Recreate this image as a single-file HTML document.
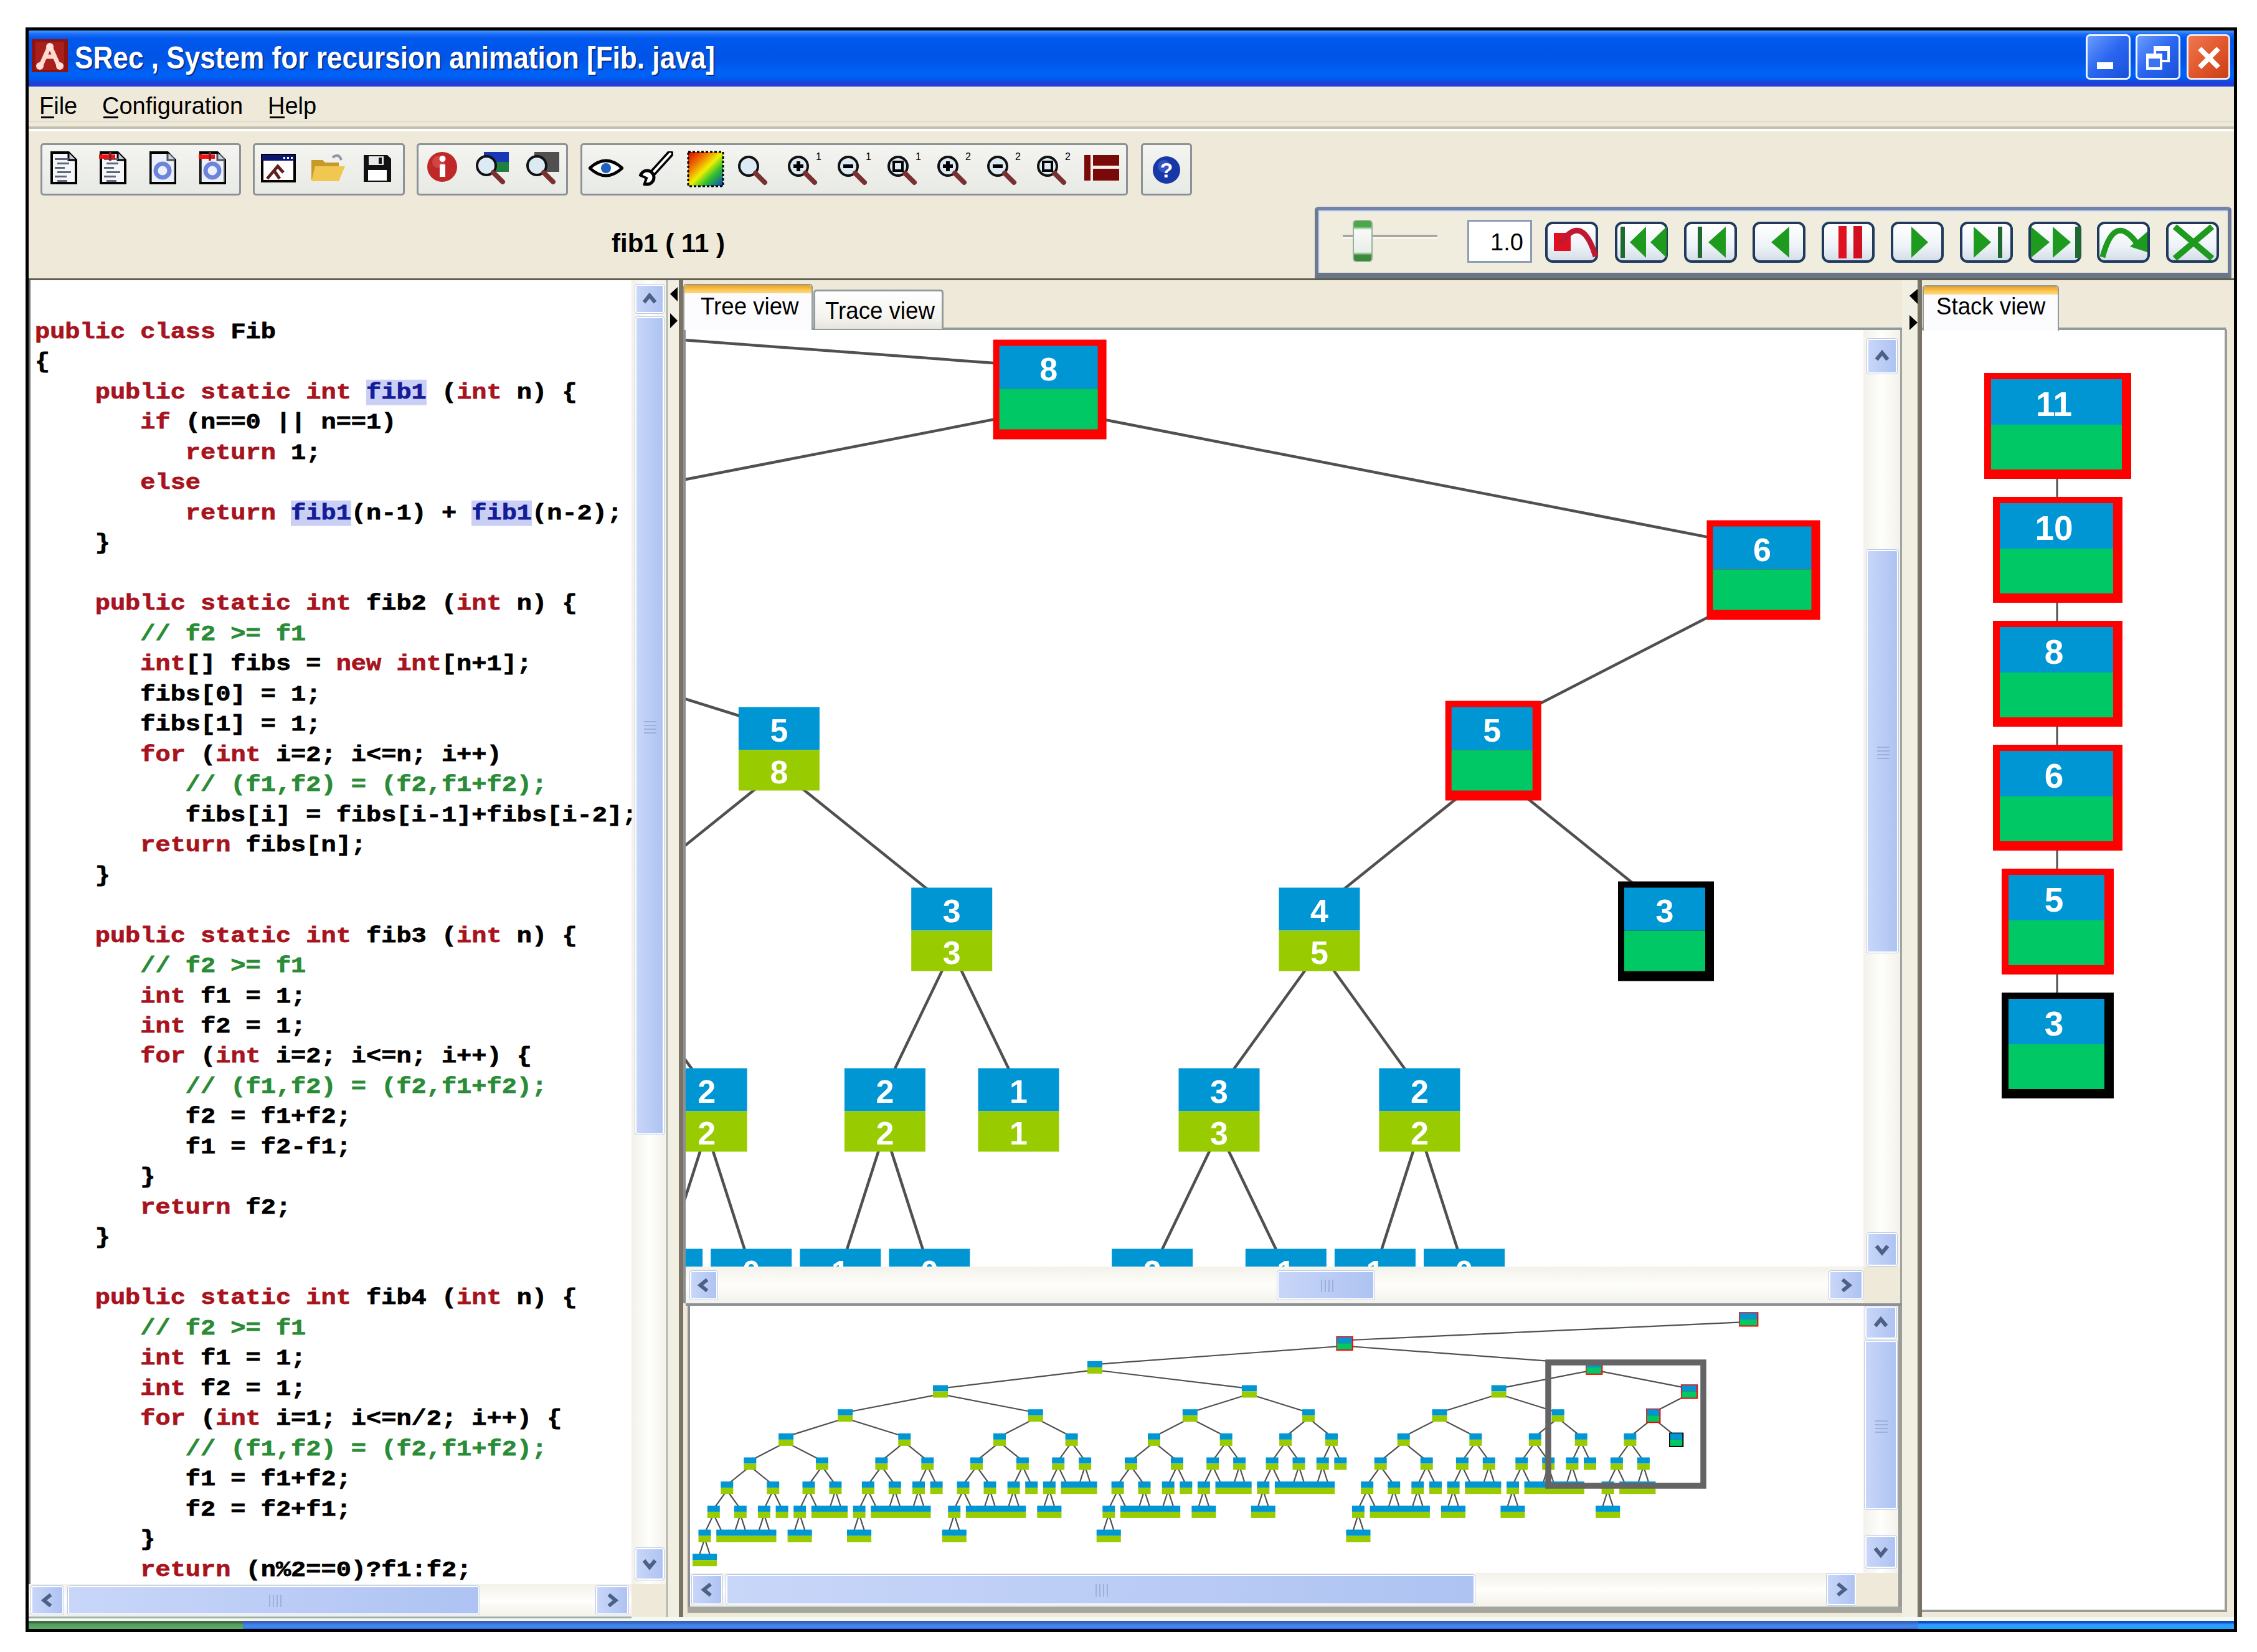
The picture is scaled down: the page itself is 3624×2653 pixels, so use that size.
<!DOCTYPE html><html><head><meta charset="utf-8"><style>
html,body{margin:0;padding:0;background:#fff;}
body{width:3624px;height:2653px;position:relative;overflow:hidden;font-family:"Liberation Sans",sans-serif;}
div,span,svg{position:absolute;box-sizing:border-box;}
.t{white-space:pre;line-height:1;}
.sbb{background:linear-gradient(to right,#C8D6F8,#B9CBF5 60%,#AEC3F2);border:2px solid #fff;outline:1px solid #B8C8E8;border-radius:3px;}
.btn{border:4px solid #1F3A5C;border-radius:12px;background:linear-gradient(#FFFFFF,#EEF3F8 60%,#D5DEE8);}
.grp{border:3px solid #8C9298;border-radius:5px;background:linear-gradient(#F4F4F0,#E8EAE6);}
</style></head><body>
<div style="left:41px;top:44px;width:3551px;height:2577px;background:#000;"></div>
<div style="left:46px;top:49px;width:3541px;height:2567px;background:#EFE9D9;"></div>
<div style="left:46px;top:49px;width:3541px;height:90px;background:linear-gradient(to bottom,#4A9CFF 0%,#1E6FFA 6%,#0058EE 14%,#0054E6 50%,#0062F8 78%,#0058EC 88%,#2040D8 92%,#1F3ED6 100%);"></div>
<svg style="left:51px;top:63px" width="58" height="53" viewBox="0 0 58 53">
<rect x="0" y="0" width="58" height="53" fill="#8E1414"/>
<rect x="6" y="4" width="46" height="45" fill="#A8201C"/>
<path d="M29 10 L14 44 M29 10 L44 44 M22 28 L36 28" stroke="#FFD8D0" stroke-width="7" fill="none"/>
<circle cx="29" cy="12" r="6" fill="#FFE8E0"/><circle cx="13" cy="43" r="6" fill="#FFE0D8"/><circle cx="45" cy="43" r="6" fill="#FFE0D8"/>
</svg>
<div class="t" id="ttl" style="left:120px;top:67.7px;font-size:50px;font-weight:bold;color:#fff;text-shadow:2px 2px 1px #0A2A80;transform-origin:0 0;transform:scaleX(0.883);">SRec , System for recursion animation [Fib. java]</div>
<div style="left:3349px;top:55px;width:72px;height:73px;border:3px solid #F0F6FF;border-radius:7px;background:linear-gradient(135deg,#6A9CFF,#2A66F0 50%,#1A50D8);"><div style="left:15px;top:42px;width:26px;height:11px;background:#fff;"></div></div>
<div style="left:3429px;top:55px;width:72px;height:73px;border:3px solid #F0F6FF;border-radius:7px;background:linear-gradient(135deg,#6A9CFF,#2A66F0 50%,#1A50D8);"><div style="left:26px;top:16px;width:26px;height:26px;border:4px solid #fff;border-top-width:8px;"></div><div style="left:14px;top:28px;width:26px;height:26px;border:4px solid #fff;border-top-width:8px;background:#3A72F0;"></div></div>
<div style="left:3511px;top:55px;width:70px;height:73px;border:3px solid #F6E8E8;border-radius:7px;background:linear-gradient(135deg,#F07850,#E2582E 50%,#C84018);"><svg style="left:10px;top:12px" width="46" height="46"><path d="M8 8 L38 38 M38 8 L8 38" stroke="#fff" stroke-width="8"/></svg></div>
<div style="left:46px;top:194px;width:3541px;height:2px;background:#DEDACB;"></div>
<div style="left:46px;top:203px;width:3541px;height:4px;background:#C2BFAE;"></div>
<div style="left:46px;top:207px;width:3541px;height:4px;background:#FFFFFF;"></div>
<div class="t" style="left:63px;top:151.4px;font-size:38px;color:#000;">File</div>
<div class="t" style="left:164px;top:151.4px;font-size:38px;color:#000;">Configuration</div>
<div class="t" style="left:430px;top:151.4px;font-size:38px;color:#000;">Help</div>
<div style="left:66px;top:187px;width:21px;height:3px;background:#000;"></div>
<div style="left:166px;top:187px;width:24px;height:3px;background:#000;"></div>
<div style="left:433px;top:187px;width:24px;height:3px;background:#000;"></div>
<div class="grp" style="left:65px;top:230px;width:322px;height:84px;"></div>
<div class="grp" style="left:406px;top:230px;width:244px;height:84px;"></div>
<div class="grp" style="left:669px;top:230px;width:243px;height:84px;"></div>
<div class="grp" style="left:932px;top:230px;width:879px;height:84px;"></div>
<div class="grp" style="left:1832px;top:230px;width:82px;height:84px;"></div>
<svg style="left:80px;top:242px" width="45" height="55" viewBox="0 0 45 55"><path d="M3 3 H30 L42 15 V52 H3 Z" fill="#F4F6FA" stroke="#000" stroke-width="4"/><path d="M30 3 V15 H42" fill="#C8CCD4" stroke="#000" stroke-width="3"/><rect x="8" y="12" width="22" height="3" fill="#606878"/><rect x="12" y="19" width="19" height="3" fill="#606878"/><rect x="8" y="26" width="16" height="3" fill="#606878"/><rect x="12" y="33" width="22" height="3" fill="#606878"/><rect x="8" y="40" width="19" height="3" fill="#606878"/><rect x="12" y="47" width="16" height="3" fill="#606878"/></svg>
<svg style="left:159px;top:242px" width="45" height="55" viewBox="0 0 45 55"><path d="M3 3 H30 L42 15 V52 H3 Z" fill="#F4F6FA" stroke="#000" stroke-width="4"/><path d="M30 3 V15 H42" fill="#C8CCD4" stroke="#000" stroke-width="3"/><rect x="8" y="12" width="22" height="3" fill="#606878"/><rect x="12" y="19" width="19" height="3" fill="#606878"/><rect x="8" y="26" width="16" height="3" fill="#606878"/><rect x="12" y="33" width="22" height="3" fill="#606878"/><rect x="8" y="40" width="19" height="3" fill="#606878"/><rect x="12" y="47" width="16" height="3" fill="#606878"/><rect x="0" y="6" width="26" height="7" fill="#F01010"/><rect x="16" y="2" width="4" height="14" fill="#802020"/></svg>
<svg style="left:239px;top:242px" width="45" height="55" viewBox="0 0 45 55"><path d="M3 3 H30 L42 15 V52 H3 Z" fill="#F4F6FA" stroke="#000" stroke-width="4"/><path d="M30 3 V15 H42" fill="#C8CCD4" stroke="#000" stroke-width="3"/><circle cx="22" cy="32" r="11" fill="none" stroke="#3050C8" stroke-width="7"/><rect x="3" y="5" width="39" height="45" fill="#DCE6FA" opacity="0.35"/></svg>
<svg style="left:319px;top:242px" width="45" height="55" viewBox="0 0 45 55"><path d="M3 3 H30 L42 15 V52 H3 Z" fill="#F4F6FA" stroke="#000" stroke-width="4"/><path d="M30 3 V15 H42" fill="#C8CCD4" stroke="#000" stroke-width="3"/><circle cx="22" cy="32" r="11" fill="none" stroke="#3050C8" stroke-width="7"/><rect x="3" y="5" width="39" height="45" fill="#DCE6FA" opacity="0.35"/><rect x="0" y="6" width="26" height="7" fill="#F01010"/><rect x="16" y="2" width="4" height="14" fill="#802020"/></svg>
<svg style="left:419px;top:247px" width="56" height="46" viewBox="0 0 56 46"><rect x="2" y="2" width="52" height="42" fill="#fff" stroke="#000" stroke-width="4"/><rect x="2" y="2" width="52" height="9" fill="#0A1670"/><rect x="36" y="5" width="3" height="3" fill="#fff"/><rect x="42" y="5" width="3" height="3" fill="#fff"/><rect x="48" y="5" width="3" height="3" fill="#fff"/><path d="M10 40 L27 20 L36 30 M21 27 L30 40" stroke="#602020" stroke-width="5" fill="none"/></svg>
<svg style="left:498px;top:245px" width="57" height="48" viewBox="0 0 57 48"><path d="M2 12 H20 L24 16 H46 V44 H2 Z" fill="#C89828"/><path d="M8 22 H56 L46 46 H2 Z" fill="#F0C850"/><path d="M36 8 Q46 0 50 12" stroke="#9098A8" stroke-width="4" fill="none"/></svg>
<svg style="left:582px;top:247px" width="48" height="47" viewBox="0 0 48 47"><path d="M2 2 H40 L46 8 V45 H2 Z" fill="#111"/><rect x="10" y="4" width="24" height="14" fill="#E8E8E8"/><rect x="26" y="6" width="5" height="10" fill="#111"/><rect x="9" y="26" width="30" height="17" fill="#fff"/></svg>
<svg style="left:684px;top:242px" width="52" height="52" viewBox="0 0 52 52"><circle cx="26" cy="26" r="24" fill="#C02828"/><circle cx="20" cy="18" r="10" fill="#E06060" opacity="0.5"/><rect x="22" y="22" width="9" height="20" fill="#fff"/><circle cx="26.5" cy="13" r="5" fill="#fff"/></svg>
<svg style="left:761px;top:242px" width="58" height="56" viewBox="0 0 58 56"><rect x="16" y="2" width="40" height="32" fill="#1838B8"/><rect x="28" y="18" width="28" height="16" fill="#208040"/><circle cx="20" cy="24" r="15" fill="#DCEAF4" stroke="#111" stroke-width="4"/><path d="M31 35 L46 50" stroke="#7A3030" stroke-width="8" stroke-linecap="round"/></svg>
<svg style="left:842px;top:242px" width="58" height="56" viewBox="0 0 58 56"><rect x="16" y="2" width="40" height="32" fill="#505050"/><circle cx="20" cy="24" r="15" fill="#DCEAF4" stroke="#111" stroke-width="4"/><path d="M31 35 L46 50" stroke="#7A3030" stroke-width="8" stroke-linecap="round"/></svg>
<svg style="left:945px;top:252px" width="56" height="36" viewBox="0 0 56 36"><path d="M2 18 Q28 -6 54 18 Q28 42 2 18 Z" fill="#fff" stroke="#000" stroke-width="5"/><circle cx="28" cy="18" r="8" fill="#2060C0"/></svg>
<svg style="left:1023px;top:243px" width="58" height="56" viewBox="0 0 58 56"><path d="M53 4 L24 36" stroke="#000" stroke-width="11" stroke-linecap="round"/><path d="M53 4 L24 36" stroke="#fff" stroke-width="4" stroke-linecap="round"/><circle cx="16" cy="42" r="11" fill="#fff" stroke="#000" stroke-width="5"/><path d="M0 40 L14 44 L8 58" fill="#EFEFEA" stroke="#EFEFEA" stroke-width="2"/><path d="M4 38 L15 43 L11 55" fill="none" stroke="#000" stroke-width="4"/></svg>
<svg style="left:1103px;top:242px" width="60" height="59" viewBox="0 0 60 59"><defs><linearGradient id="cg" x1="0" y1="0" x2="1" y2="1"><stop offset="0" stop-color="#E00000"/><stop offset="0.3" stop-color="#F08000"/><stop offset="0.5" stop-color="#F0F000"/><stop offset="0.7" stop-color="#30C030"/><stop offset="1" stop-color="#1040C0"/></linearGradient></defs><rect x="2" y="2" width="56" height="55" fill="url(#cg)" stroke="#000" stroke-width="3" stroke-dasharray="4 3"/></svg>
<svg style="left:1182px;top:243px" width="58" height="56" viewBox="0 0 58 56"><circle cx="20" cy="24" r="15" fill="#DCEAF4" stroke="#111" stroke-width="4"/><path d="M31 35 L46 50" stroke="#7A3030" stroke-width="8" stroke-linecap="round"/></svg>
<svg style="left:1262px;top:243px" width="58" height="56" viewBox="0 0 58 56"><circle cx="20" cy="24" r="15" fill="#DCEAF4" stroke="#111" stroke-width="4"/><path d="M31 35 L46 50" stroke="#7A3030" stroke-width="8" stroke-linecap="round"/><path d="M12 24 H28 M20 16 V32" stroke="#000" stroke-width="6"/><text x="48" y="14" font-size="16" font-family="Liberation Sans" fill="#000">1</text></svg>
<svg style="left:1342px;top:243px" width="58" height="56" viewBox="0 0 58 56"><circle cx="20" cy="24" r="15" fill="#DCEAF4" stroke="#111" stroke-width="4"/><path d="M31 35 L46 50" stroke="#7A3030" stroke-width="8" stroke-linecap="round"/><path d="M12 24 H28" stroke="#000" stroke-width="6"/><text x="48" y="14" font-size="16" font-family="Liberation Sans" fill="#000">1</text></svg>
<svg style="left:1422px;top:243px" width="58" height="56" viewBox="0 0 58 56"><circle cx="20" cy="24" r="15" fill="#DCEAF4" stroke="#111" stroke-width="4"/><path d="M31 35 L46 50" stroke="#7A3030" stroke-width="8" stroke-linecap="round"/><rect x="13" y="17" width="14" height="14" fill="none" stroke="#000" stroke-width="4"/><text x="48" y="14" font-size="16" font-family="Liberation Sans" fill="#000">1</text></svg>
<svg style="left:1502px;top:243px" width="58" height="56" viewBox="0 0 58 56"><circle cx="20" cy="24" r="15" fill="#DCEAF4" stroke="#111" stroke-width="4"/><path d="M31 35 L46 50" stroke="#7A3030" stroke-width="8" stroke-linecap="round"/><path d="M12 24 H28 M20 16 V32" stroke="#000" stroke-width="6"/><text x="48" y="14" font-size="16" font-family="Liberation Sans" fill="#000">2</text></svg>
<svg style="left:1582px;top:243px" width="58" height="56" viewBox="0 0 58 56"><circle cx="20" cy="24" r="15" fill="#DCEAF4" stroke="#111" stroke-width="4"/><path d="M31 35 L46 50" stroke="#7A3030" stroke-width="8" stroke-linecap="round"/><path d="M12 24 H28" stroke="#000" stroke-width="6"/><text x="48" y="14" font-size="16" font-family="Liberation Sans" fill="#000">2</text></svg>
<svg style="left:1662px;top:243px" width="58" height="56" viewBox="0 0 58 56"><circle cx="20" cy="24" r="15" fill="#DCEAF4" stroke="#111" stroke-width="4"/><path d="M31 35 L46 50" stroke="#7A3030" stroke-width="8" stroke-linecap="round"/><rect x="13" y="17" width="14" height="14" fill="none" stroke="#000" stroke-width="4"/><text x="48" y="14" font-size="16" font-family="Liberation Sans" fill="#000">2</text></svg>
<svg style="left:1741px;top:249px" width="56" height="41" viewBox="0 0 56 41"><rect x="0" y="0" width="56" height="41" fill="#7A0A0A"/><rect x="14" y="17" width="42" height="5" fill="#F4F0E8"/><rect x="10" y="0" width="4" height="41" fill="#F4F0E8"/></svg>
<svg style="left:1849px;top:249px" width="48" height="48" viewBox="0 0 48 48"><circle cx="24" cy="24" r="22" fill="#1838A8"/><circle cx="20" cy="18" r="10" fill="#4868D8" opacity="0.6"/><text x="24" y="36" font-size="34" font-weight="bold" text-anchor="middle" font-family="Liberation Sans" fill="#fff">?</text></svg>
<div class="t" id="lbl" style="left:982px;top:370px;font-size:42px;font-weight:bold;color:#000;">fib1 ( 11 )</div>
<div style="left:2111px;top:332px;width:1472px;height:120px;border-style:solid;border-color:#7384AC #6E7C98 #6A7686 #6C7A90;border-width:6px 6px 14px 6px;border-radius:6px;background:#F0ECDE;box-shadow:inset 0 2px 0 #D8E4F8,inset 2px 0 0 #D8E4F8;"></div>
<div style="left:2156px;top:377px;width:152px;height:4px;background:#A8A8A0;"></div>
<div style="left:2156px;top:381px;width:152px;height:2px;background:#FFFFFF;"></div>
<div style="left:2172px;top:353px;width:32px;height:68px;border:2px solid #9AB0A0;border-radius:6px;background:linear-gradient(#4AA84A 0,#4AA84A 14%,#F8FAF8 22%,#E8EEE8 78%,#3A8A3A 86%,#3A8A3A 100%);"></div>
<div style="left:2356px;top:353px;width:104px;height:69px;border:3px solid #8A9CB4;background:#fff;"><div class="t" style="left:34px;top:14px;font-size:38px;color:#000;">1.0</div></div>
<div class="btn" style="left:2481px;top:356px;width:85px;height:66px;"></div>
<div class="btn" style="left:2593px;top:356px;width:85px;height:66px;"></div>
<div class="btn" style="left:2704px;top:356px;width:85px;height:66px;"></div>
<div class="btn" style="left:2814px;top:356px;width:85px;height:66px;"></div>
<div class="btn" style="left:2925px;top:356px;width:85px;height:66px;"></div>
<div class="btn" style="left:3036px;top:356px;width:85px;height:66px;"></div>
<div class="btn" style="left:3147px;top:356px;width:85px;height:66px;"></div>
<div class="btn" style="left:3257px;top:356px;width:85px;height:66px;"></div>
<div class="btn" style="left:3367px;top:356px;width:85px;height:66px;"></div>
<div class="btn" style="left:3478px;top:356px;width:85px;height:66px;"></div>
<svg style="left:0;top:0" width="3624" height="460"><rect x="2495" y="374" width="27" height="29" fill="#E01020"/><path d="M2505 392 Q2540 340 2562 412" stroke="#C01830" stroke-width="9" fill="none"/><rect x="2602" y="364" width="7" height="50" fill="#1F6A30"/><path d="M2617 389.0 L2643 364 L2643 414 Z" fill="#1E9A1E"/><path d="M2650 389.0 L2676 364 L2676 414 Z" fill="#1E9A1E"/><rect x="2726" y="364" width="7" height="50" fill="#1F6A30"/><path d="M2743 389.0 L2771 364 L2771 414 Z" fill="#1E9A1E"/><path d="M2844 389.0 L2873 364 L2873 414 Z" fill="#1E9A1E"/><rect x="2952" y="363" width="13" height="52" fill="#E01020"/><rect x="2976" y="363" width="14" height="52" fill="#D01020"/><path d="M3096 389.0 L3069 364 L3069 414 Z" fill="#1E9A1E"/><path d="M3197 389.0 L3169 364 L3169 414 Z" fill="#1E9A1E"/><rect x="3208" y="364" width="7" height="50" fill="#1F6A30"/><path d="M3291 389.0 L3261 364 L3261 414 Z" fill="#1E9A1E"/><path d="M3325 389.0 L3296 364 L3296 414 Z" fill="#1E9A1E"/><rect x="3332" y="364" width="9" height="50" fill="#1F6A30"/><path d="M3376 413 Q3395 340 3432 392" stroke="#1E9A1E" stroke-width="9" fill="none"/><path d="M3420 396 L3448 372 L3448 405 Z" fill="#1E9A1E"/><path d="M3492 364 L3552 415 M3552 364 L3492 415" stroke="#1E9A1E" stroke-width="10"/></svg>
<div style="left:46px;top:447px;width:3541px;height:3px;background:#5E5E52;"></div>
<div style="left:46px;top:450px;width:968px;height:2094px;background:#fff;"></div>
<div style="left:46px;top:450px;width:3px;height:2147px;background:#707074;"></div>
<div style="left:0;top:0;width:1014px;height:2544px;overflow:hidden;"><div class="t code" style="left:56px;top:511.7px;"><b style="color:#A8141E">public class </b><b>Fib</b></div><div class="t code" style="left:56px;top:560.2px;"><b>{</b></div><div class="t code" style="left:56px;top:608.7px;"><b>    </b><b style="color:#A8141E">public static int </b><b style="color:#161C98;background:#CACFF6">fib1</b><b> (</b><b style="color:#A8141E">int</b><b> n) {</b></div><div class="t code" style="left:56px;top:657.1px;"><b>       </b><b style="color:#A8141E">if</b><b> (n==0 || n==1)</b></div><div class="t code" style="left:56px;top:705.6px;"><b>          </b><b style="color:#A8141E">return</b><b> 1;</b></div><div class="t code" style="left:56px;top:754.1px;"><b>       </b><b style="color:#A8141E">else</b></div><div class="t code" style="left:56px;top:802.6px;"><b>          </b><b style="color:#A8141E">return </b><b style="color:#161C98;background:#CACFF6">fib1</b><b>(n-1) + </b><b style="color:#161C98;background:#CACFF6">fib1</b><b>(n-2);</b></div><div class="t code" style="left:56px;top:851.1px;"><b>    }</b></div><div class="t code" style="left:56px;top:899.6px;"></div><div class="t code" style="left:56px;top:948.1px;"><b>    </b><b style="color:#A8141E">public static int </b><b>fib2 (</b><b style="color:#A8141E">int</b><b> n) {</b></div><div class="t code" style="left:56px;top:996.6px;"><b>       </b><b style="color:#2A8C36">// f2 &gt;= f1</b></div><div class="t code" style="left:56px;top:1045.1px;"><b>       </b><b style="color:#A8141E">int</b><b>[] fibs = </b><b style="color:#A8141E">new int</b><b>[n+1];</b></div><div class="t code" style="left:56px;top:1093.6px;"><b>       fibs[0] = 1;</b></div><div class="t code" style="left:56px;top:1142.0px;"><b>       fibs[1] = 1;</b></div><div class="t code" style="left:56px;top:1190.5px;"><b>       </b><b style="color:#A8141E">for</b><b> (</b><b style="color:#A8141E">int</b><b> i=2; i&lt;=n; i++)</b></div><div class="t code" style="left:56px;top:1239.0px;"><b>          </b><b style="color:#2A8C36">// (f1,f2) = (f2,f1+f2);</b></div><div class="t code" style="left:56px;top:1287.5px;"><b>          fibs[i] = fibs[i-1]+fibs[i-2];</b></div><div class="t code" style="left:56px;top:1336.0px;"><b>       </b><b style="color:#A8141E">return</b><b> fibs[n];</b></div><div class="t code" style="left:56px;top:1384.5px;"><b>    }</b></div><div class="t code" style="left:56px;top:1433.0px;"></div><div class="t code" style="left:56px;top:1481.5px;"><b>    </b><b style="color:#A8141E">public static int </b><b>fib3 (</b><b style="color:#A8141E">int</b><b> n) {</b></div><div class="t code" style="left:56px;top:1530.0px;"><b>       </b><b style="color:#2A8C36">// f2 &gt;= f1</b></div><div class="t code" style="left:56px;top:1578.5px;"><b>       </b><b style="color:#A8141E">int</b><b> f1 = 1;</b></div><div class="t code" style="left:56px;top:1626.9px;"><b>       </b><b style="color:#A8141E">int</b><b> f2 = 1;</b></div><div class="t code" style="left:56px;top:1675.4px;"><b>       </b><b style="color:#A8141E">for</b><b> (</b><b style="color:#A8141E">int</b><b> i=2; i&lt;=n; i++) {</b></div><div class="t code" style="left:56px;top:1723.9px;"><b>          </b><b style="color:#2A8C36">// (f1,f2) = (f2,f1+f2);</b></div><div class="t code" style="left:56px;top:1772.4px;"><b>          f2 = f1+f2;</b></div><div class="t code" style="left:56px;top:1820.9px;"><b>          f1 = f2-f1;</b></div><div class="t code" style="left:56px;top:1869.4px;"><b>       }</b></div><div class="t code" style="left:56px;top:1917.9px;"><b>       </b><b style="color:#A8141E">return</b><b> f2;</b></div><div class="t code" style="left:56px;top:1966.4px;"><b>    }</b></div><div class="t code" style="left:56px;top:2014.9px;"></div><div class="t code" style="left:56px;top:2063.4px;"><b>    </b><b style="color:#A8141E">public static int </b><b>fib4 (</b><b style="color:#A8141E">int</b><b> n) {</b></div><div class="t code" style="left:56px;top:2111.8px;"><b>       </b><b style="color:#2A8C36">// f2 &gt;= f1</b></div><div class="t code" style="left:56px;top:2160.3px;"><b>       </b><b style="color:#A8141E">int</b><b> f1 = 1;</b></div><div class="t code" style="left:56px;top:2208.8px;"><b>       </b><b style="color:#A8141E">int</b><b> f2 = 1;</b></div><div class="t code" style="left:56px;top:2257.3px;"><b>       </b><b style="color:#A8141E">for</b><b> (</b><b style="color:#A8141E">int</b><b> i=1; i&lt;=n/2; i++) {</b></div><div class="t code" style="left:56px;top:2305.8px;"><b>          </b><b style="color:#2A8C36">// (f1,f2) = (f2,f1+f2);</b></div><div class="t code" style="left:56px;top:2354.3px;"><b>          f1 = f1+f2;</b></div><div class="t code" style="left:56px;top:2402.8px;"><b>          f2 = f2+f1;</b></div><div class="t code" style="left:56px;top:2451.3px;"><b>       }</b></div><div class="t code" style="left:56px;top:2499.8px;"><b>       </b><b style="color:#A8141E">return</b><b> (n%2==0)?f1:f2;</b></div></div>
<style>.code{font-family:"Liberation Mono",monospace;font-size:40.3px;color:#000;transform:scaleY(0.89);transform-origin:0 30.8px;-webkit-text-stroke:0.9px currentColor;} .code b{position:static;font-weight:bold;}</style>
<div style="left:1014px;top:450px;width:56px;height:2094px;background:linear-gradient(to right,#F3F1EA,#FEFEFB 50%,#F3F1EA);"></div>
<div class="sbb" style="left:1020px;top:457px;width:46px;height:46px;"><svg style="left:-2px;top:-2px" width="46" height="46"><path d="M14.0 28.5 L23.0 17.5 L32.0 28.5" stroke="#4D6185" stroke-width="6" fill="none"/></svg></div>
<div class="sbb" style="left:1020px;top:509px;width:46px;height:1313px;"><div style="left:12.0px;top:646.5px;width:20px;height:2px;background:#EEF4FE;border-bottom:2px solid #9CB0DC;"></div><div style="left:12.0px;top:652.5px;width:20px;height:2px;background:#EEF4FE;border-bottom:2px solid #9CB0DC;"></div><div style="left:12.0px;top:658.5px;width:20px;height:2px;background:#EEF4FE;border-bottom:2px solid #9CB0DC;"></div><div style="left:12.0px;top:664.5px;width:20px;height:2px;background:#EEF4FE;border-bottom:2px solid #9CB0DC;"></div></div>
<div class="sbb" style="left:1020px;top:2486px;width:46px;height:51px;"><svg style="left:-2px;top:-2px" width="46" height="51"><path d="M14.0 20.0 L23.0 31.0 L32.0 20.0" stroke="#4D6185" stroke-width="6" fill="none"/></svg></div>
<div style="left:46px;top:2544px;width:968px;height:53px;background:linear-gradient(to bottom,#F3F1EA,#FEFEFB 50%,#F3F1EA);"></div>
<div class="sbb" style="left:50px;top:2547px;width:52px;height:46px;"><svg style="left:-2px;top:-2px" width="52" height="46"><path d="M31.5 14.0 L20.5 23.0 L31.5 32.0" stroke="#4D6185" stroke-width="6" fill="none"/></svg></div>
<div class="sbb" style="left:109px;top:2547px;width:661px;height:46px;"><div style="left:320.5px;top:12.0px;width:2px;height:20px;background:#EEF4FE;border-right:2px solid #9CB0DC;"></div><div style="left:326.5px;top:12.0px;width:2px;height:20px;background:#EEF4FE;border-right:2px solid #9CB0DC;"></div><div style="left:332.5px;top:12.0px;width:2px;height:20px;background:#EEF4FE;border-right:2px solid #9CB0DC;"></div><div style="left:338.5px;top:12.0px;width:2px;height:20px;background:#EEF4FE;border-right:2px solid #9CB0DC;"></div></div>
<div class="sbb" style="left:957px;top:2547px;width:52px;height:46px;"><svg style="left:-2px;top:-2px" width="52" height="46"><path d="M20.5 14.0 L31.5 23.0 L20.5 32.0" stroke="#4D6185" stroke-width="6" fill="none"/></svg></div>
<div style="left:1014px;top:2544px;width:56px;height:53px;background:#EFE9D9;"></div>
<div style="left:1070px;top:450px;width:2px;height:2147px;background:#A8A89C;"></div>
<div style="left:1072px;top:450px;width:18px;height:2150px;background:#F1EEE2;"></div>
<svg style="left:1074px;top:460px" width="16" height="68" viewBox="0 0 16 68"><path d="M2 12 L14 1 V24 Z M2 43 V67 L14 55 Z" fill="#000"/></svg>
<div style="left:1090px;top:450px;width:7px;height:2150px;background:#7A7262;"></div>
<div style="left:1097px;top:450px;width:1957px;height:80px;background:#EFE9D9;"></div>
<div style="left:1097px;top:526px;width:1957px;height:4px;background:#919B9C;"></div>
<div style="left:1306px;top:465px;width:209px;height:63px;border:3px solid #919B9C;border-bottom:none;border-radius:5px 5px 0 0;background:linear-gradient(#FFFFFF,#F4F3EE 70%,#E6E4DC);"></div>
<div class="t" style="left:1325px;top:479px;font-size:39px;color:#000;transform:scaleX(0.94);transform-origin:0 0;">Trace view</div>
<div style="left:1097px;top:456px;width:208px;height:75px;border:2px solid #919B9C;border-bottom:none;border-radius:5px 5px 0 0;background:#FCFCFE;"><div style="left:0;top:0;width:204px;height:13px;border-radius:4px 4px 0 0;background:linear-gradient(#E8A028,#FFC850 60%,#F8D890);"></div></div>
<div class="t" style="left:1125px;top:472px;font-size:39px;color:#000;transform:scaleX(0.94);transform-origin:0 0;">Tree view</div>
<div style="left:1097px;top:530px;width:4px;height:1563px;background:#8C9094;"></div>
<div style="left:1101px;top:530px;width:1891px;height:1504px;background:#fff;"></div>
<div style="left:2992px;top:530px;width:59px;height:1504px;background:linear-gradient(to right,#F3F1EA,#FEFEFB 50%,#F3F1EA);"></div>
<div class="sbb" style="left:2998px;top:544px;width:48px;height:56px;"><svg style="left:-2px;top:-2px" width="48" height="56"><path d="M15.0 33.5 L24.0 22.5 L33.0 33.5" stroke="#4D6185" stroke-width="6" fill="none"/></svg></div>
<div class="sbb" style="left:2997px;top:883px;width:51px;height:647px;"><div style="left:14.5px;top:313.5px;width:20px;height:2px;background:#EEF4FE;border-bottom:2px solid #9CB0DC;"></div><div style="left:14.5px;top:319.5px;width:20px;height:2px;background:#EEF4FE;border-bottom:2px solid #9CB0DC;"></div><div style="left:14.5px;top:325.5px;width:20px;height:2px;background:#EEF4FE;border-bottom:2px solid #9CB0DC;"></div><div style="left:14.5px;top:331.5px;width:20px;height:2px;background:#EEF4FE;border-bottom:2px solid #9CB0DC;"></div></div>
<div class="sbb" style="left:2998px;top:1980px;width:48px;height:53px;"><svg style="left:-2px;top:-2px" width="48" height="53"><path d="M15.0 21.0 L24.0 32.0 L33.0 21.0" stroke="#4D6185" stroke-width="6" fill="none"/></svg></div>
<div style="left:1101px;top:2034px;width:1891px;height:59px;background:linear-gradient(to bottom,#F3F1EA,#FEFEFB 50%,#F3F1EA);"></div>
<div class="sbb" style="left:1108px;top:2041px;width:44px;height:46px;"><svg style="left:-2px;top:-2px" width="44" height="46"><path d="M27.5 14.0 L16.5 23.0 L27.5 32.0" stroke="#4D6185" stroke-width="6" fill="none"/></svg></div>
<div class="sbb" style="left:2051px;top:2041px;width:156px;height:46px;"><div style="left:68.0px;top:12.0px;width:2px;height:20px;background:#EEF4FE;border-right:2px solid #9CB0DC;"></div><div style="left:74.0px;top:12.0px;width:2px;height:20px;background:#EEF4FE;border-right:2px solid #9CB0DC;"></div><div style="left:80.0px;top:12.0px;width:2px;height:20px;background:#EEF4FE;border-right:2px solid #9CB0DC;"></div><div style="left:86.0px;top:12.0px;width:2px;height:20px;background:#EEF4FE;border-right:2px solid #9CB0DC;"></div></div>
<div class="sbb" style="left:2937px;top:2041px;width:54px;height:46px;"><svg style="left:-2px;top:-2px" width="54" height="46"><path d="M21.5 14.0 L32.5 23.0 L21.5 32.0" stroke="#4D6185" stroke-width="6" fill="none"/></svg></div>
<div style="left:2992px;top:2034px;width:59px;height:59px;background:#EFE9D9;"></div>
<div style="left:1101px;top:2093px;width:1953px;height:4px;background:#8C9094;"></div>
<div style="left:3051px;top:530px;width:4px;height:1563px;background:#A0A4A0;"></div>
<div style="left:1104px;top:2097px;width:4px;height:486px;background:#8C9094;"></div>
<div style="left:1108px;top:2097px;width:1884px;height:431px;background:#fff;"></div>
<div style="left:2992px;top:2097px;width:56px;height:431px;background:linear-gradient(to right,#F3F1EA,#FEFEFB 50%,#F3F1EA);"></div>
<div class="sbb" style="left:2995px;top:2098px;width:50px;height:52px;"><svg style="left:-2px;top:-2px" width="50" height="52"><path d="M16.0 31.5 L25.0 20.5 L34.0 31.5" stroke="#4D6185" stroke-width="6" fill="none"/></svg></div>
<div class="sbb" style="left:2994px;top:2153px;width:52px;height:271px;"><div style="left:15.0px;top:125.5px;width:20px;height:2px;background:#EEF4FE;border-bottom:2px solid #9CB0DC;"></div><div style="left:15.0px;top:131.5px;width:20px;height:2px;background:#EEF4FE;border-bottom:2px solid #9CB0DC;"></div><div style="left:15.0px;top:137.5px;width:20px;height:2px;background:#EEF4FE;border-bottom:2px solid #9CB0DC;"></div><div style="left:15.0px;top:143.5px;width:20px;height:2px;background:#EEF4FE;border-bottom:2px solid #9CB0DC;"></div></div>
<div class="sbb" style="left:2995px;top:2466px;width:50px;height:52px;"><svg style="left:-2px;top:-2px" width="50" height="52"><path d="M16.0 20.5 L25.0 31.5 L34.0 20.5" stroke="#4D6185" stroke-width="6" fill="none"/></svg></div>
<div style="left:1108px;top:2526px;width:1884px;height:54px;background:linear-gradient(to bottom,#F3F1EA,#FEFEFB 50%,#F3F1EA);"></div>
<div class="sbb" style="left:1111px;top:2529px;width:49px;height:48px;"><svg style="left:-2px;top:-2px" width="49" height="48"><path d="M30.0 15.0 L19.0 24.0 L30.0 33.0" stroke="#4D6185" stroke-width="6" fill="none"/></svg></div>
<div class="sbb" style="left:1166px;top:2529px;width:1202px;height:48px;"><div style="left:591.0px;top:13.0px;width:2px;height:20px;background:#EEF4FE;border-right:2px solid #9CB0DC;"></div><div style="left:597.0px;top:13.0px;width:2px;height:20px;background:#EEF4FE;border-right:2px solid #9CB0DC;"></div><div style="left:603.0px;top:13.0px;width:2px;height:20px;background:#EEF4FE;border-right:2px solid #9CB0DC;"></div><div style="left:609.0px;top:13.0px;width:2px;height:20px;background:#EEF4FE;border-right:2px solid #9CB0DC;"></div></div>
<div class="sbb" style="left:2933px;top:2527px;width:47px;height:51px;"><svg style="left:-2px;top:-2px" width="47" height="51"><path d="M18.0 16.5 L29.0 25.5 L18.0 34.5" stroke="#4D6185" stroke-width="6" fill="none"/></svg></div>
<div style="left:2980px;top:2526px;width:68px;height:54px;background:#EFE9D9;"></div>
<div style="left:3048px;top:2097px;width:6px;height:493px;background:#9A9C98;"></div>
<div style="left:1104px;top:2580px;width:1950px;height:10px;background:#A4A69E;"></div>
<div style="left:3054px;top:450px;width:25px;height:2150px;background:#F1EEE2;"></div>
<svg style="left:3064px;top:462px" width="17" height="70" viewBox="0 0 17 70"><path d="M2 13 L15 2 V26 Z M2 44 V68 L15 56 Z" fill="#000"/></svg>
<div style="left:3079px;top:450px;width:7px;height:2150px;background:#7A7262;"></div>
<div style="left:3086px;top:450px;width:501px;height:2153px;background:#EFE9D9;"></div>
<div style="left:3086px;top:529px;width:488px;height:2058px;background:#fff;"></div>
<div style="left:3572px;top:529px;width:4px;height:2060px;background:#9A9C98;"></div>
<div style="left:3086px;top:2585px;width:490px;height:4px;background:#9A9C98;"></div>
<div style="left:3086px;top:526px;width:488px;height:4px;background:#919B9C;"></div>
<div style="left:3087px;top:458px;width:219px;height:73px;border:2px solid #919B9C;border-bottom:none;border-radius:5px 5px 0 0;background:#FCFCFE;"><div style="left:0;top:0;width:215px;height:13px;border-radius:4px 4px 0 0;background:linear-gradient(#E8A028,#FFC850 60%,#F8D890);"></div></div>
<div class="t" style="left:3109px;top:471.5px;font-size:39px;color:#000;transform:scaleX(0.94);transform-origin:0 0;">Stack view</div>
<div style="left:46px;top:2597px;width:3541px;height:6px;background:#F6F8F2;"></div>
<div style="left:46px;top:2596px;width:968px;height:3px;background:#A0B0A8;"></div>
<div style="left:46px;top:2603px;width:3034px;height:13px;background:linear-gradient(#2E5CC0 0,#3A66C4 25%,#4A7ED0 45%,#3E8AFA 65%,#3A86F8 80%,#2A6EE6 100%);"></div>
<div style="left:3080px;top:2603px;width:507px;height:13px;background:linear-gradient(#0A50C8 0,#0A50C8 20%,#3A96FF 45%,#14AAFF 100%);"></div>
<div style="left:46px;top:2603px;width:344px;height:13px;background:linear-gradient(#3A7042 0,#3A7042 20%,#609A6A 45%,#52A85A 70%,#5EB264 100%);"></div>
<svg style="left:0;top:0" width="3624" height="2653"><defs><clipPath id="cm"><rect x="1101" y="530" width="1891" height="1504"/></clipPath><clipPath id="co"><rect x="1108" y="2097" width="1884" height="429"/></clipPath></defs><style>.nt{font-family:"Liberation Sans",sans-serif;font-weight:bold;font-size:52px;fill:#fff;text-anchor:middle;}</style><g clip-path="url(#cm)"><line x1="3543.5" y1="76.5" x2="-1321.8" y2="299.5" stroke="#505050" stroke-width="4.5"/><line x1="-1321.8" y1="366.5" x2="-4327.2" y2="589.5" stroke="#505050" stroke-width="4.5"/><line x1="-4327.2" y1="656.5" x2="-6186.9" y2="879.5" stroke="#505050" stroke-width="4.5"/><line x1="-6186.9" y1="946.5" x2="-7332.8" y2="1169.5" stroke="#505050" stroke-width="4.5"/><line x1="-7332.8" y1="1236.5" x2="-8046.1" y2="1459.5" stroke="#505050" stroke-width="4.5"/><line x1="-8046.1" y1="1526.5" x2="-8479.9" y2="1749.5" stroke="#505050" stroke-width="4.5"/><line x1="-8479.9" y1="1816.5" x2="-8757.1" y2="2039.5" stroke="#505050" stroke-width="4.5"/><line x1="-8757.1" y1="2106.5" x2="-8918.1" y2="2329.5" stroke="#505050" stroke-width="4.5"/><line x1="-8918.1" y1="2396.5" x2="-9025.5" y2="2619.5" stroke="#505050" stroke-width="4.5"/><line x1="-9025.5" y1="2686.5" x2="-9097.0" y2="2909.5" stroke="#505050" stroke-width="4.5"/><line x1="-9025.5" y1="2686.5" x2="-8953.9" y2="2909.5" stroke="#505050" stroke-width="4.5"/><line x1="-8918.1" y1="2396.5" x2="-8810.8" y2="2619.5" stroke="#505050" stroke-width="4.5"/><line x1="-8757.1" y1="2106.5" x2="-8596.1" y2="2329.5" stroke="#505050" stroke-width="4.5"/><line x1="-8596.1" y1="2396.5" x2="-8667.7" y2="2619.5" stroke="#505050" stroke-width="4.5"/><line x1="-8596.1" y1="2396.5" x2="-8524.6" y2="2619.5" stroke="#505050" stroke-width="4.5"/><line x1="-8479.9" y1="1816.5" x2="-8202.6" y2="2039.5" stroke="#505050" stroke-width="4.5"/><line x1="-8202.6" y1="2106.5" x2="-8310.0" y2="2329.5" stroke="#505050" stroke-width="4.5"/><line x1="-8310.0" y1="2396.5" x2="-8381.5" y2="2619.5" stroke="#505050" stroke-width="4.5"/><line x1="-8310.0" y1="2396.5" x2="-8238.4" y2="2619.5" stroke="#505050" stroke-width="4.5"/><line x1="-8202.6" y1="2106.5" x2="-8095.3" y2="2329.5" stroke="#505050" stroke-width="4.5"/><line x1="-8046.1" y1="1526.5" x2="-7612.3" y2="1749.5" stroke="#505050" stroke-width="4.5"/><line x1="-7612.3" y1="1816.5" x2="-7773.3" y2="2039.5" stroke="#505050" stroke-width="4.5"/><line x1="-7773.3" y1="2106.5" x2="-7880.6" y2="2329.5" stroke="#505050" stroke-width="4.5"/><line x1="-7880.6" y1="2396.5" x2="-7952.2" y2="2619.5" stroke="#505050" stroke-width="4.5"/><line x1="-7880.6" y1="2396.5" x2="-7809.1" y2="2619.5" stroke="#505050" stroke-width="4.5"/><line x1="-7773.3" y1="2106.5" x2="-7666.0" y2="2329.5" stroke="#505050" stroke-width="4.5"/><line x1="-7612.3" y1="1816.5" x2="-7451.4" y2="2039.5" stroke="#505050" stroke-width="4.5"/><line x1="-7451.4" y1="2106.5" x2="-7522.9" y2="2329.5" stroke="#505050" stroke-width="4.5"/><line x1="-7451.4" y1="2106.5" x2="-7379.8" y2="2329.5" stroke="#505050" stroke-width="4.5"/><line x1="-7332.8" y1="1236.5" x2="-6619.6" y2="1459.5" stroke="#505050" stroke-width="4.5"/><line x1="-6619.6" y1="1526.5" x2="-6896.8" y2="1749.5" stroke="#505050" stroke-width="4.5"/><line x1="-6896.8" y1="1816.5" x2="-7057.8" y2="2039.5" stroke="#505050" stroke-width="4.5"/><line x1="-7057.8" y1="2106.5" x2="-7165.1" y2="2329.5" stroke="#505050" stroke-width="4.5"/><line x1="-7165.1" y1="2396.5" x2="-7236.7" y2="2619.5" stroke="#505050" stroke-width="4.5"/><line x1="-7165.1" y1="2396.5" x2="-7093.6" y2="2619.5" stroke="#505050" stroke-width="4.5"/><line x1="-7057.8" y1="2106.5" x2="-6950.5" y2="2329.5" stroke="#505050" stroke-width="4.5"/><line x1="-6896.8" y1="1816.5" x2="-6735.9" y2="2039.5" stroke="#505050" stroke-width="4.5"/><line x1="-6735.9" y1="2106.5" x2="-6807.4" y2="2329.5" stroke="#505050" stroke-width="4.5"/><line x1="-6735.9" y1="2106.5" x2="-6664.3" y2="2329.5" stroke="#505050" stroke-width="4.5"/><line x1="-6619.6" y1="1526.5" x2="-6342.3" y2="1749.5" stroke="#505050" stroke-width="4.5"/><line x1="-6342.3" y1="1816.5" x2="-6449.6" y2="2039.5" stroke="#505050" stroke-width="4.5"/><line x1="-6449.6" y1="2106.5" x2="-6521.2" y2="2329.5" stroke="#505050" stroke-width="4.5"/><line x1="-6449.6" y1="2106.5" x2="-6378.1" y2="2329.5" stroke="#505050" stroke-width="4.5"/><line x1="-6342.3" y1="1816.5" x2="-6235.0" y2="2039.5" stroke="#505050" stroke-width="4.5"/><line x1="-6186.9" y1="946.5" x2="-5041.0" y2="1169.5" stroke="#505050" stroke-width="4.5"/><line x1="-5041.0" y1="1236.5" x2="-5474.8" y2="1459.5" stroke="#505050" stroke-width="4.5"/><line x1="-5474.8" y1="1526.5" x2="-5752.0" y2="1749.5" stroke="#505050" stroke-width="4.5"/><line x1="-5752.0" y1="1816.5" x2="-5913.0" y2="2039.5" stroke="#505050" stroke-width="4.5"/><line x1="-5913.0" y1="2106.5" x2="-6020.4" y2="2329.5" stroke="#505050" stroke-width="4.5"/><line x1="-6020.4" y1="2396.5" x2="-6091.9" y2="2619.5" stroke="#505050" stroke-width="4.5"/><line x1="-6020.4" y1="2396.5" x2="-5948.8" y2="2619.5" stroke="#505050" stroke-width="4.5"/><line x1="-5913.0" y1="2106.5" x2="-5805.7" y2="2329.5" stroke="#505050" stroke-width="4.5"/><line x1="-5752.0" y1="1816.5" x2="-5591.1" y2="2039.5" stroke="#505050" stroke-width="4.5"/><line x1="-5591.1" y1="2106.5" x2="-5662.6" y2="2329.5" stroke="#505050" stroke-width="4.5"/><line x1="-5591.1" y1="2106.5" x2="-5519.5" y2="2329.5" stroke="#505050" stroke-width="4.5"/><line x1="-5474.8" y1="1526.5" x2="-5197.5" y2="1749.5" stroke="#505050" stroke-width="4.5"/><line x1="-5197.5" y1="1816.5" x2="-5304.9" y2="2039.5" stroke="#505050" stroke-width="4.5"/><line x1="-5304.9" y1="2106.5" x2="-5376.4" y2="2329.5" stroke="#505050" stroke-width="4.5"/><line x1="-5304.9" y1="2106.5" x2="-5233.3" y2="2329.5" stroke="#505050" stroke-width="4.5"/><line x1="-5197.5" y1="1816.5" x2="-5090.2" y2="2039.5" stroke="#505050" stroke-width="4.5"/><line x1="-5041.0" y1="1236.5" x2="-4607.2" y2="1459.5" stroke="#505050" stroke-width="4.5"/><line x1="-4607.2" y1="1526.5" x2="-4768.2" y2="1749.5" stroke="#505050" stroke-width="4.5"/><line x1="-4768.2" y1="1816.5" x2="-4875.6" y2="2039.5" stroke="#505050" stroke-width="4.5"/><line x1="-4875.6" y1="2106.5" x2="-4947.1" y2="2329.5" stroke="#505050" stroke-width="4.5"/><line x1="-4875.6" y1="2106.5" x2="-4804.0" y2="2329.5" stroke="#505050" stroke-width="4.5"/><line x1="-4768.2" y1="1816.5" x2="-4660.9" y2="2039.5" stroke="#505050" stroke-width="4.5"/><line x1="-4607.2" y1="1526.5" x2="-4446.2" y2="1749.5" stroke="#505050" stroke-width="4.5"/><line x1="-4446.2" y1="1816.5" x2="-4517.8" y2="2039.5" stroke="#505050" stroke-width="4.5"/><line x1="-4446.2" y1="1816.5" x2="-4374.7" y2="2039.5" stroke="#505050" stroke-width="4.5"/><line x1="-4327.2" y1="656.5" x2="-2467.4" y2="879.5" stroke="#505050" stroke-width="4.5"/><line x1="-2467.4" y1="946.5" x2="-3180.7" y2="1169.5" stroke="#505050" stroke-width="4.5"/><line x1="-3180.7" y1="1236.5" x2="-3614.5" y2="1459.5" stroke="#505050" stroke-width="4.5"/><line x1="-3614.5" y1="1526.5" x2="-3891.7" y2="1749.5" stroke="#505050" stroke-width="4.5"/><line x1="-3891.7" y1="1816.5" x2="-4052.7" y2="2039.5" stroke="#505050" stroke-width="4.5"/><line x1="-4052.7" y1="2106.5" x2="-4160.1" y2="2329.5" stroke="#505050" stroke-width="4.5"/><line x1="-4160.1" y1="2396.5" x2="-4231.6" y2="2619.5" stroke="#505050" stroke-width="4.5"/><line x1="-4160.1" y1="2396.5" x2="-4088.5" y2="2619.5" stroke="#505050" stroke-width="4.5"/><line x1="-4052.7" y1="2106.5" x2="-3945.4" y2="2329.5" stroke="#505050" stroke-width="4.5"/><line x1="-3891.7" y1="1816.5" x2="-3730.8" y2="2039.5" stroke="#505050" stroke-width="4.5"/><line x1="-3730.8" y1="2106.5" x2="-3802.3" y2="2329.5" stroke="#505050" stroke-width="4.5"/><line x1="-3730.8" y1="2106.5" x2="-3659.2" y2="2329.5" stroke="#505050" stroke-width="4.5"/><line x1="-3614.5" y1="1526.5" x2="-3337.2" y2="1749.5" stroke="#505050" stroke-width="4.5"/><line x1="-3337.2" y1="1816.5" x2="-3444.6" y2="2039.5" stroke="#505050" stroke-width="4.5"/><line x1="-3444.6" y1="2106.5" x2="-3516.1" y2="2329.5" stroke="#505050" stroke-width="4.5"/><line x1="-3444.6" y1="2106.5" x2="-3373.0" y2="2329.5" stroke="#505050" stroke-width="4.5"/><line x1="-3337.2" y1="1816.5" x2="-3229.9" y2="2039.5" stroke="#505050" stroke-width="4.5"/><line x1="-3180.7" y1="1236.5" x2="-2746.9" y2="1459.5" stroke="#505050" stroke-width="4.5"/><line x1="-2746.9" y1="1526.5" x2="-2907.9" y2="1749.5" stroke="#505050" stroke-width="4.5"/><line x1="-2907.9" y1="1816.5" x2="-3015.2" y2="2039.5" stroke="#505050" stroke-width="4.5"/><line x1="-3015.2" y1="2106.5" x2="-3086.8" y2="2329.5" stroke="#505050" stroke-width="4.5"/><line x1="-3015.2" y1="2106.5" x2="-2943.7" y2="2329.5" stroke="#505050" stroke-width="4.5"/><line x1="-2907.9" y1="1816.5" x2="-2800.6" y2="2039.5" stroke="#505050" stroke-width="4.5"/><line x1="-2746.9" y1="1526.5" x2="-2585.9" y2="1749.5" stroke="#505050" stroke-width="4.5"/><line x1="-2585.9" y1="1816.5" x2="-2657.5" y2="2039.5" stroke="#505050" stroke-width="4.5"/><line x1="-2585.9" y1="1816.5" x2="-2514.4" y2="2039.5" stroke="#505050" stroke-width="4.5"/><line x1="-2467.4" y1="946.5" x2="-1754.2" y2="1169.5" stroke="#505050" stroke-width="4.5"/><line x1="-1754.2" y1="1236.5" x2="-2031.4" y2="1459.5" stroke="#505050" stroke-width="4.5"/><line x1="-2031.4" y1="1526.5" x2="-2192.4" y2="1749.5" stroke="#505050" stroke-width="4.5"/><line x1="-2192.4" y1="1816.5" x2="-2299.8" y2="2039.5" stroke="#505050" stroke-width="4.5"/><line x1="-2299.8" y1="2106.5" x2="-2371.3" y2="2329.5" stroke="#505050" stroke-width="4.5"/><line x1="-2299.8" y1="2106.5" x2="-2228.2" y2="2329.5" stroke="#505050" stroke-width="4.5"/><line x1="-2192.4" y1="1816.5" x2="-2085.1" y2="2039.5" stroke="#505050" stroke-width="4.5"/><line x1="-2031.4" y1="1526.5" x2="-1870.5" y2="1749.5" stroke="#505050" stroke-width="4.5"/><line x1="-1870.5" y1="1816.5" x2="-1942.0" y2="2039.5" stroke="#505050" stroke-width="4.5"/><line x1="-1870.5" y1="1816.5" x2="-1798.9" y2="2039.5" stroke="#505050" stroke-width="4.5"/><line x1="-1754.2" y1="1236.5" x2="-1476.9" y2="1459.5" stroke="#505050" stroke-width="4.5"/><line x1="-1476.9" y1="1526.5" x2="-1584.2" y2="1749.5" stroke="#505050" stroke-width="4.5"/><line x1="-1584.2" y1="1816.5" x2="-1655.8" y2="2039.5" stroke="#505050" stroke-width="4.5"/><line x1="-1584.2" y1="1816.5" x2="-1512.7" y2="2039.5" stroke="#505050" stroke-width="4.5"/><line x1="-1476.9" y1="1526.5" x2="-1369.6" y2="1749.5" stroke="#505050" stroke-width="4.5"/><line x1="-1321.8" y1="366.5" x2="1683.6" y2="589.5" stroke="#505050" stroke-width="4.5"/><line x1="1683.6" y1="656.5" x2="537.7" y2="879.5" stroke="#505050" stroke-width="4.5"/><line x1="537.7" y1="946.5" x2="-175.6" y2="1169.5" stroke="#505050" stroke-width="4.5"/><line x1="-175.6" y1="1236.5" x2="-609.4" y2="1459.5" stroke="#505050" stroke-width="4.5"/><line x1="-609.4" y1="1526.5" x2="-886.6" y2="1749.5" stroke="#505050" stroke-width="4.5"/><line x1="-886.6" y1="1816.5" x2="-1047.6" y2="2039.5" stroke="#505050" stroke-width="4.5"/><line x1="-1047.6" y1="2106.5" x2="-1155.0" y2="2329.5" stroke="#505050" stroke-width="4.5"/><line x1="-1155.0" y1="2396.5" x2="-1226.5" y2="2619.5" stroke="#505050" stroke-width="4.5"/><line x1="-1155.0" y1="2396.5" x2="-1083.4" y2="2619.5" stroke="#505050" stroke-width="4.5"/><line x1="-1047.6" y1="2106.5" x2="-940.3" y2="2329.5" stroke="#505050" stroke-width="4.5"/><line x1="-886.6" y1="1816.5" x2="-725.6" y2="2039.5" stroke="#505050" stroke-width="4.5"/><line x1="-725.6" y1="2106.5" x2="-797.2" y2="2329.5" stroke="#505050" stroke-width="4.5"/><line x1="-725.6" y1="2106.5" x2="-654.1" y2="2329.5" stroke="#505050" stroke-width="4.5"/><line x1="-609.4" y1="1526.5" x2="-332.1" y2="1749.5" stroke="#505050" stroke-width="4.5"/><line x1="-332.1" y1="1816.5" x2="-439.5" y2="2039.5" stroke="#505050" stroke-width="4.5"/><line x1="-439.5" y1="2106.5" x2="-511.0" y2="2329.5" stroke="#505050" stroke-width="4.5"/><line x1="-439.5" y1="2106.5" x2="-367.9" y2="2329.5" stroke="#505050" stroke-width="4.5"/><line x1="-332.1" y1="1816.5" x2="-224.8" y2="2039.5" stroke="#505050" stroke-width="4.5"/><line x1="-175.6" y1="1236.5" x2="258.2" y2="1459.5" stroke="#505050" stroke-width="4.5"/><line x1="258.2" y1="1526.5" x2="97.2" y2="1749.5" stroke="#505050" stroke-width="4.5"/><line x1="97.2" y1="1816.5" x2="-10.1" y2="2039.5" stroke="#505050" stroke-width="4.5"/><line x1="-10.1" y1="2106.5" x2="-81.7" y2="2329.5" stroke="#505050" stroke-width="4.5"/><line x1="-10.1" y1="2106.5" x2="61.4" y2="2329.5" stroke="#505050" stroke-width="4.5"/><line x1="97.2" y1="1816.5" x2="204.5" y2="2039.5" stroke="#505050" stroke-width="4.5"/><line x1="258.2" y1="1526.5" x2="419.1" y2="1749.5" stroke="#505050" stroke-width="4.5"/><line x1="419.1" y1="1816.5" x2="347.6" y2="2039.5" stroke="#505050" stroke-width="4.5"/><line x1="419.1" y1="1816.5" x2="490.7" y2="2039.5" stroke="#505050" stroke-width="4.5"/><line x1="537.7" y1="946.5" x2="1250.9" y2="1169.5" stroke="#505050" stroke-width="4.5"/><line x1="1250.9" y1="1236.5" x2="973.7" y2="1459.5" stroke="#505050" stroke-width="4.5"/><line x1="973.7" y1="1526.5" x2="812.7" y2="1749.5" stroke="#505050" stroke-width="4.5"/><line x1="812.7" y1="1816.5" x2="705.4" y2="2039.5" stroke="#505050" stroke-width="4.5"/><line x1="705.4" y1="2106.5" x2="633.8" y2="2329.5" stroke="#505050" stroke-width="4.5"/><line x1="705.4" y1="2106.5" x2="776.9" y2="2329.5" stroke="#505050" stroke-width="4.5"/><line x1="812.7" y1="1816.5" x2="920.0" y2="2039.5" stroke="#505050" stroke-width="4.5"/><line x1="973.7" y1="1526.5" x2="1134.6" y2="1749.5" stroke="#505050" stroke-width="4.5"/><line x1="1134.6" y1="1816.5" x2="1063.1" y2="2039.5" stroke="#505050" stroke-width="4.5"/><line x1="1134.6" y1="1816.5" x2="1206.2" y2="2039.5" stroke="#505050" stroke-width="4.5"/><line x1="1250.9" y1="1236.5" x2="1528.2" y2="1459.5" stroke="#505050" stroke-width="4.5"/><line x1="1528.2" y1="1526.5" x2="1420.9" y2="1749.5" stroke="#505050" stroke-width="4.5"/><line x1="1420.9" y1="1816.5" x2="1349.3" y2="2039.5" stroke="#505050" stroke-width="4.5"/><line x1="1420.9" y1="1816.5" x2="1492.4" y2="2039.5" stroke="#505050" stroke-width="4.5"/><line x1="1528.2" y1="1526.5" x2="1635.5" y2="1749.5" stroke="#505050" stroke-width="4.5"/><line x1="1683.6" y1="656.5" x2="2829.5" y2="879.5" stroke="#505050" stroke-width="4.5"/><line x1="2829.5" y1="946.5" x2="2395.7" y2="1169.5" stroke="#505050" stroke-width="4.5"/><line x1="2395.7" y1="1236.5" x2="2118.5" y2="1459.5" stroke="#505050" stroke-width="4.5"/><line x1="2118.5" y1="1526.5" x2="1957.5" y2="1749.5" stroke="#505050" stroke-width="4.5"/><line x1="1957.5" y1="1816.5" x2="1850.1" y2="2039.5" stroke="#505050" stroke-width="4.5"/><line x1="1850.1" y1="2106.5" x2="1778.6" y2="2329.5" stroke="#505050" stroke-width="4.5"/><line x1="1850.1" y1="2106.5" x2="1921.7" y2="2329.5" stroke="#505050" stroke-width="4.5"/><line x1="1957.5" y1="1816.5" x2="2064.8" y2="2039.5" stroke="#505050" stroke-width="4.5"/><line x1="2118.5" y1="1526.5" x2="2279.4" y2="1749.5" stroke="#505050" stroke-width="4.5"/><line x1="2279.4" y1="1816.5" x2="2207.9" y2="2039.5" stroke="#505050" stroke-width="4.5"/><line x1="2279.4" y1="1816.5" x2="2351.0" y2="2039.5" stroke="#505050" stroke-width="4.5"/><line x1="2395.7" y1="1236.5" x2="2673.0" y2="1459.5" stroke="#505050" stroke-width="4.5"/><rect x="1594.6" y="545.5" width="182.0" height="160.0" fill="#FF0000"/><rect x="1604.6" y="555.5" width="158" height="69" fill="#0096D4"/><rect x="1604.6" y="624.5" width="158" height="65" fill="#00C864"/><text x="1683.6" y="610.5" class="nt">8</text><rect x="1185.9" y="1135.5" width="130" height="69" fill="#0096D4"/><rect x="1185.9" y="1204.5" width="130" height="65" fill="#99CC00"/><text x="1250.9" y="1190.5" class="nt">5</text><text x="1250.9" y="1257.5" class="nt">8</text><rect x="1069.6" y="1715.5" width="130" height="69" fill="#0096D4"/><rect x="1069.6" y="1784.5" width="130" height="65" fill="#99CC00"/><text x="1134.6" y="1770.5" class="nt">2</text><text x="1134.6" y="1837.5" class="nt">2</text><rect x="998.1" y="2005.5" width="130" height="69" fill="#0096D4"/><rect x="998.1" y="2074.5" width="130" height="65" fill="#99CC00"/><text x="1063.1" y="2060.5" class="nt">1</text><text x="1063.1" y="2127.5" class="nt">1</text><rect x="1141.2" y="2005.5" width="130" height="69" fill="#0096D4"/><rect x="1141.2" y="2074.5" width="130" height="65" fill="#99CC00"/><text x="1206.2" y="2060.5" class="nt">0</text><text x="1206.2" y="2127.5" class="nt">1</text><rect x="1463.2" y="1425.5" width="130" height="69" fill="#0096D4"/><rect x="1463.2" y="1494.5" width="130" height="65" fill="#99CC00"/><text x="1528.2" y="1480.5" class="nt">3</text><text x="1528.2" y="1547.5" class="nt">3</text><rect x="1355.9" y="1715.5" width="130" height="69" fill="#0096D4"/><rect x="1355.9" y="1784.5" width="130" height="65" fill="#99CC00"/><text x="1420.9" y="1770.5" class="nt">2</text><text x="1420.9" y="1837.5" class="nt">2</text><rect x="1284.3" y="2005.5" width="130" height="69" fill="#0096D4"/><rect x="1284.3" y="2074.5" width="130" height="65" fill="#99CC00"/><text x="1349.3" y="2060.5" class="nt">1</text><text x="1349.3" y="2127.5" class="nt">1</text><rect x="1427.4" y="2005.5" width="130" height="69" fill="#0096D4"/><rect x="1427.4" y="2074.5" width="130" height="65" fill="#99CC00"/><text x="1492.4" y="2060.5" class="nt">0</text><text x="1492.4" y="2127.5" class="nt">1</text><rect x="1570.5" y="1715.5" width="130" height="69" fill="#0096D4"/><rect x="1570.5" y="1784.5" width="130" height="65" fill="#99CC00"/><text x="1635.5" y="1770.5" class="nt">1</text><text x="1635.5" y="1837.5" class="nt">1</text><rect x="2740.5" y="835.5" width="182.0" height="160.0" fill="#FF0000"/><rect x="2750.5" y="845.5" width="158" height="69" fill="#0096D4"/><rect x="2750.5" y="914.5" width="158" height="65" fill="#00C864"/><text x="2829.5" y="900.5" class="nt">6</text><rect x="2320.7" y="1125.5" width="154.0" height="160.0" fill="#FF0000"/><rect x="2330.7" y="1135.5" width="130" height="69" fill="#0096D4"/><rect x="2330.7" y="1204.5" width="130" height="65" fill="#00C864"/><text x="2395.7" y="1190.5" class="nt">5</text><rect x="2053.5" y="1425.5" width="130" height="69" fill="#0096D4"/><rect x="2053.5" y="1494.5" width="130" height="65" fill="#99CC00"/><text x="2118.5" y="1480.5" class="nt">4</text><text x="2118.5" y="1547.5" class="nt">5</text><rect x="1892.5" y="1715.5" width="130" height="69" fill="#0096D4"/><rect x="1892.5" y="1784.5" width="130" height="65" fill="#99CC00"/><text x="1957.5" y="1770.5" class="nt">3</text><text x="1957.5" y="1837.5" class="nt">3</text><rect x="1785.1" y="2005.5" width="130" height="69" fill="#0096D4"/><rect x="1785.1" y="2074.5" width="130" height="65" fill="#99CC00"/><text x="1850.1" y="2060.5" class="nt">2</text><text x="1850.1" y="2127.5" class="nt">2</text><rect x="1999.8" y="2005.5" width="130" height="69" fill="#0096D4"/><rect x="1999.8" y="2074.5" width="130" height="65" fill="#99CC00"/><text x="2064.8" y="2060.5" class="nt">1</text><text x="2064.8" y="2127.5" class="nt">1</text><rect x="2214.4" y="1715.5" width="130" height="69" fill="#0096D4"/><rect x="2214.4" y="1784.5" width="130" height="65" fill="#99CC00"/><text x="2279.4" y="1770.5" class="nt">2</text><text x="2279.4" y="1837.5" class="nt">2</text><rect x="2142.9" y="2005.5" width="130" height="69" fill="#0096D4"/><rect x="2142.9" y="2074.5" width="130" height="65" fill="#99CC00"/><text x="2207.9" y="2060.5" class="nt">1</text><text x="2207.9" y="2127.5" class="nt">1</text><rect x="2286.0" y="2005.5" width="130" height="69" fill="#0096D4"/><rect x="2286.0" y="2074.5" width="130" height="65" fill="#99CC00"/><text x="2351.0" y="2060.5" class="nt">0</text><text x="2351.0" y="2127.5" class="nt">1</text><rect x="2598.0" y="1415.5" width="154.0" height="160.0" fill="#000000"/><rect x="2608.0" y="1425.5" width="130" height="69" fill="#0096D4"/><rect x="2608.0" y="1494.5" width="130" height="65" fill="#00C864"/><text x="2673.0" y="1480.5" class="nt">3</text></g>
<g clip-path="url(#co)"><line x1="2807.4" y1="2122.8" x2="2158.7" y2="2152.5" stroke="#505050" stroke-width="2.2"/><line x1="2158.7" y1="2161.5" x2="1758.0" y2="2191.2" stroke="#505050" stroke-width="2.2"/><line x1="1758.0" y1="2200.1" x2="1510.0" y2="2229.9" stroke="#505050" stroke-width="2.2"/><line x1="1510.0" y1="2238.8" x2="1357.2" y2="2268.5" stroke="#505050" stroke-width="2.2"/><line x1="1357.2" y1="2277.5" x2="1262.1" y2="2307.2" stroke="#505050" stroke-width="2.2"/><line x1="1262.1" y1="2316.1" x2="1204.3" y2="2345.9" stroke="#505050" stroke-width="2.2"/><line x1="1204.3" y1="2354.8" x2="1167.3" y2="2384.5" stroke="#505050" stroke-width="2.2"/><line x1="1167.3" y1="2393.5" x2="1145.8" y2="2423.2" stroke="#505050" stroke-width="2.2"/><line x1="1145.8" y1="2432.1" x2="1131.5" y2="2461.9" stroke="#505050" stroke-width="2.2"/><line x1="1131.5" y1="2470.8" x2="1122.0" y2="2500.5" stroke="#505050" stroke-width="2.2"/><line x1="1131.5" y1="2470.8" x2="1141.1" y2="2500.5" stroke="#505050" stroke-width="2.2"/><line x1="1145.8" y1="2432.1" x2="1160.2" y2="2461.9" stroke="#505050" stroke-width="2.2"/><line x1="1167.3" y1="2393.5" x2="1188.8" y2="2423.2" stroke="#505050" stroke-width="2.2"/><line x1="1188.8" y1="2432.1" x2="1179.2" y2="2461.9" stroke="#505050" stroke-width="2.2"/><line x1="1188.8" y1="2432.1" x2="1198.3" y2="2461.9" stroke="#505050" stroke-width="2.2"/><line x1="1204.3" y1="2354.8" x2="1241.2" y2="2384.5" stroke="#505050" stroke-width="2.2"/><line x1="1241.2" y1="2393.5" x2="1226.9" y2="2423.2" stroke="#505050" stroke-width="2.2"/><line x1="1226.9" y1="2432.1" x2="1217.4" y2="2461.9" stroke="#505050" stroke-width="2.2"/><line x1="1226.9" y1="2432.1" x2="1236.5" y2="2461.9" stroke="#505050" stroke-width="2.2"/><line x1="1241.2" y1="2393.5" x2="1255.6" y2="2423.2" stroke="#505050" stroke-width="2.2"/><line x1="1262.1" y1="2316.1" x2="1320.0" y2="2345.9" stroke="#505050" stroke-width="2.2"/><line x1="1320.0" y1="2354.8" x2="1298.5" y2="2384.5" stroke="#505050" stroke-width="2.2"/><line x1="1298.5" y1="2393.5" x2="1284.2" y2="2423.2" stroke="#505050" stroke-width="2.2"/><line x1="1284.2" y1="2432.1" x2="1274.6" y2="2461.9" stroke="#505050" stroke-width="2.2"/><line x1="1284.2" y1="2432.1" x2="1293.7" y2="2461.9" stroke="#505050" stroke-width="2.2"/><line x1="1298.5" y1="2393.5" x2="1312.8" y2="2423.2" stroke="#505050" stroke-width="2.2"/><line x1="1320.0" y1="2354.8" x2="1341.4" y2="2384.5" stroke="#505050" stroke-width="2.2"/><line x1="1341.4" y1="2393.5" x2="1331.9" y2="2423.2" stroke="#505050" stroke-width="2.2"/><line x1="1341.4" y1="2393.5" x2="1351.0" y2="2423.2" stroke="#505050" stroke-width="2.2"/><line x1="1357.2" y1="2277.5" x2="1452.3" y2="2307.2" stroke="#505050" stroke-width="2.2"/><line x1="1452.3" y1="2316.1" x2="1415.4" y2="2345.9" stroke="#505050" stroke-width="2.2"/><line x1="1415.4" y1="2354.8" x2="1393.9" y2="2384.5" stroke="#505050" stroke-width="2.2"/><line x1="1393.9" y1="2393.5" x2="1379.6" y2="2423.2" stroke="#505050" stroke-width="2.2"/><line x1="1379.6" y1="2432.1" x2="1370.0" y2="2461.9" stroke="#505050" stroke-width="2.2"/><line x1="1379.6" y1="2432.1" x2="1389.1" y2="2461.9" stroke="#505050" stroke-width="2.2"/><line x1="1393.9" y1="2393.5" x2="1408.2" y2="2423.2" stroke="#505050" stroke-width="2.2"/><line x1="1415.4" y1="2354.8" x2="1436.8" y2="2384.5" stroke="#505050" stroke-width="2.2"/><line x1="1436.8" y1="2393.5" x2="1427.3" y2="2423.2" stroke="#505050" stroke-width="2.2"/><line x1="1436.8" y1="2393.5" x2="1446.4" y2="2423.2" stroke="#505050" stroke-width="2.2"/><line x1="1452.3" y1="2316.1" x2="1489.3" y2="2345.9" stroke="#505050" stroke-width="2.2"/><line x1="1489.3" y1="2354.8" x2="1475.0" y2="2384.5" stroke="#505050" stroke-width="2.2"/><line x1="1475.0" y1="2393.5" x2="1465.4" y2="2423.2" stroke="#505050" stroke-width="2.2"/><line x1="1475.0" y1="2393.5" x2="1484.5" y2="2423.2" stroke="#505050" stroke-width="2.2"/><line x1="1489.3" y1="2354.8" x2="1503.6" y2="2384.5" stroke="#505050" stroke-width="2.2"/><line x1="1510.0" y1="2238.8" x2="1662.8" y2="2268.5" stroke="#505050" stroke-width="2.2"/><line x1="1662.8" y1="2277.5" x2="1605.0" y2="2307.2" stroke="#505050" stroke-width="2.2"/><line x1="1605.0" y1="2316.1" x2="1568.0" y2="2345.9" stroke="#505050" stroke-width="2.2"/><line x1="1568.0" y1="2354.8" x2="1546.5" y2="2384.5" stroke="#505050" stroke-width="2.2"/><line x1="1546.5" y1="2393.5" x2="1532.2" y2="2423.2" stroke="#505050" stroke-width="2.2"/><line x1="1532.2" y1="2432.1" x2="1522.7" y2="2461.9" stroke="#505050" stroke-width="2.2"/><line x1="1532.2" y1="2432.1" x2="1541.8" y2="2461.9" stroke="#505050" stroke-width="2.2"/><line x1="1546.5" y1="2393.5" x2="1560.8" y2="2423.2" stroke="#505050" stroke-width="2.2"/><line x1="1568.0" y1="2354.8" x2="1589.5" y2="2384.5" stroke="#505050" stroke-width="2.2"/><line x1="1589.5" y1="2393.5" x2="1579.9" y2="2423.2" stroke="#505050" stroke-width="2.2"/><line x1="1589.5" y1="2393.5" x2="1599.0" y2="2423.2" stroke="#505050" stroke-width="2.2"/><line x1="1605.0" y1="2316.1" x2="1641.9" y2="2345.9" stroke="#505050" stroke-width="2.2"/><line x1="1641.9" y1="2354.8" x2="1627.6" y2="2384.5" stroke="#505050" stroke-width="2.2"/><line x1="1627.6" y1="2393.5" x2="1618.1" y2="2423.2" stroke="#505050" stroke-width="2.2"/><line x1="1627.6" y1="2393.5" x2="1637.2" y2="2423.2" stroke="#505050" stroke-width="2.2"/><line x1="1641.9" y1="2354.8" x2="1656.2" y2="2384.5" stroke="#505050" stroke-width="2.2"/><line x1="1662.8" y1="2277.5" x2="1720.6" y2="2307.2" stroke="#505050" stroke-width="2.2"/><line x1="1720.6" y1="2316.1" x2="1699.2" y2="2345.9" stroke="#505050" stroke-width="2.2"/><line x1="1699.2" y1="2354.8" x2="1684.9" y2="2384.5" stroke="#505050" stroke-width="2.2"/><line x1="1684.9" y1="2393.5" x2="1675.3" y2="2423.2" stroke="#505050" stroke-width="2.2"/><line x1="1684.9" y1="2393.5" x2="1694.4" y2="2423.2" stroke="#505050" stroke-width="2.2"/><line x1="1699.2" y1="2354.8" x2="1713.5" y2="2384.5" stroke="#505050" stroke-width="2.2"/><line x1="1720.6" y1="2316.1" x2="1742.1" y2="2345.9" stroke="#505050" stroke-width="2.2"/><line x1="1742.1" y1="2354.8" x2="1732.6" y2="2384.5" stroke="#505050" stroke-width="2.2"/><line x1="1742.1" y1="2354.8" x2="1751.6" y2="2384.5" stroke="#505050" stroke-width="2.2"/><line x1="1758.0" y1="2200.1" x2="2005.9" y2="2229.9" stroke="#505050" stroke-width="2.2"/><line x1="2005.9" y1="2238.8" x2="1910.8" y2="2268.5" stroke="#505050" stroke-width="2.2"/><line x1="1910.8" y1="2277.5" x2="1853.0" y2="2307.2" stroke="#505050" stroke-width="2.2"/><line x1="1853.0" y1="2316.1" x2="1816.0" y2="2345.9" stroke="#505050" stroke-width="2.2"/><line x1="1816.0" y1="2354.8" x2="1794.6" y2="2384.5" stroke="#505050" stroke-width="2.2"/><line x1="1794.6" y1="2393.5" x2="1780.3" y2="2423.2" stroke="#505050" stroke-width="2.2"/><line x1="1780.3" y1="2432.1" x2="1770.7" y2="2461.9" stroke="#505050" stroke-width="2.2"/><line x1="1780.3" y1="2432.1" x2="1789.8" y2="2461.9" stroke="#505050" stroke-width="2.2"/><line x1="1794.6" y1="2393.5" x2="1808.9" y2="2423.2" stroke="#505050" stroke-width="2.2"/><line x1="1816.0" y1="2354.8" x2="1837.5" y2="2384.5" stroke="#505050" stroke-width="2.2"/><line x1="1837.5" y1="2393.5" x2="1828.0" y2="2423.2" stroke="#505050" stroke-width="2.2"/><line x1="1837.5" y1="2393.5" x2="1847.0" y2="2423.2" stroke="#505050" stroke-width="2.2"/><line x1="1853.0" y1="2316.1" x2="1890.0" y2="2345.9" stroke="#505050" stroke-width="2.2"/><line x1="1890.0" y1="2354.8" x2="1875.7" y2="2384.5" stroke="#505050" stroke-width="2.2"/><line x1="1875.7" y1="2393.5" x2="1866.1" y2="2423.2" stroke="#505050" stroke-width="2.2"/><line x1="1875.7" y1="2393.5" x2="1885.2" y2="2423.2" stroke="#505050" stroke-width="2.2"/><line x1="1890.0" y1="2354.8" x2="1904.3" y2="2384.5" stroke="#505050" stroke-width="2.2"/><line x1="1910.8" y1="2277.5" x2="1968.7" y2="2307.2" stroke="#505050" stroke-width="2.2"/><line x1="1968.7" y1="2316.1" x2="1947.2" y2="2345.9" stroke="#505050" stroke-width="2.2"/><line x1="1947.2" y1="2354.8" x2="1932.9" y2="2384.5" stroke="#505050" stroke-width="2.2"/><line x1="1932.9" y1="2393.5" x2="1923.4" y2="2423.2" stroke="#505050" stroke-width="2.2"/><line x1="1932.9" y1="2393.5" x2="1942.4" y2="2423.2" stroke="#505050" stroke-width="2.2"/><line x1="1947.2" y1="2354.8" x2="1961.5" y2="2384.5" stroke="#505050" stroke-width="2.2"/><line x1="1968.7" y1="2316.1" x2="1990.1" y2="2345.9" stroke="#505050" stroke-width="2.2"/><line x1="1990.1" y1="2354.8" x2="1980.6" y2="2384.5" stroke="#505050" stroke-width="2.2"/><line x1="1990.1" y1="2354.8" x2="1999.7" y2="2384.5" stroke="#505050" stroke-width="2.2"/><line x1="2005.9" y1="2238.8" x2="2101.0" y2="2268.5" stroke="#505050" stroke-width="2.2"/><line x1="2101.0" y1="2277.5" x2="2064.1" y2="2307.2" stroke="#505050" stroke-width="2.2"/><line x1="2064.1" y1="2316.1" x2="2042.6" y2="2345.9" stroke="#505050" stroke-width="2.2"/><line x1="2042.6" y1="2354.8" x2="2028.3" y2="2384.5" stroke="#505050" stroke-width="2.2"/><line x1="2028.3" y1="2393.5" x2="2018.8" y2="2423.2" stroke="#505050" stroke-width="2.2"/><line x1="2028.3" y1="2393.5" x2="2037.8" y2="2423.2" stroke="#505050" stroke-width="2.2"/><line x1="2042.6" y1="2354.8" x2="2056.9" y2="2384.5" stroke="#505050" stroke-width="2.2"/><line x1="2064.1" y1="2316.1" x2="2085.5" y2="2345.9" stroke="#505050" stroke-width="2.2"/><line x1="2085.5" y1="2354.8" x2="2076.0" y2="2384.5" stroke="#505050" stroke-width="2.2"/><line x1="2085.5" y1="2354.8" x2="2095.1" y2="2384.5" stroke="#505050" stroke-width="2.2"/><line x1="2101.0" y1="2277.5" x2="2138.0" y2="2307.2" stroke="#505050" stroke-width="2.2"/><line x1="2138.0" y1="2316.1" x2="2123.7" y2="2345.9" stroke="#505050" stroke-width="2.2"/><line x1="2123.7" y1="2354.8" x2="2114.2" y2="2384.5" stroke="#505050" stroke-width="2.2"/><line x1="2123.7" y1="2354.8" x2="2133.2" y2="2384.5" stroke="#505050" stroke-width="2.2"/><line x1="2138.0" y1="2316.1" x2="2152.3" y2="2345.9" stroke="#505050" stroke-width="2.2"/><line x1="2158.7" y1="2161.5" x2="2559.4" y2="2191.2" stroke="#505050" stroke-width="2.2"/><line x1="2559.4" y1="2200.1" x2="2406.6" y2="2229.9" stroke="#505050" stroke-width="2.2"/><line x1="2406.6" y1="2238.8" x2="2311.5" y2="2268.5" stroke="#505050" stroke-width="2.2"/><line x1="2311.5" y1="2277.5" x2="2253.7" y2="2307.2" stroke="#505050" stroke-width="2.2"/><line x1="2253.7" y1="2316.1" x2="2216.7" y2="2345.9" stroke="#505050" stroke-width="2.2"/><line x1="2216.7" y1="2354.8" x2="2195.2" y2="2384.5" stroke="#505050" stroke-width="2.2"/><line x1="2195.2" y1="2393.5" x2="2180.9" y2="2423.2" stroke="#505050" stroke-width="2.2"/><line x1="2180.9" y1="2432.1" x2="2171.4" y2="2461.9" stroke="#505050" stroke-width="2.2"/><line x1="2180.9" y1="2432.1" x2="2190.5" y2="2461.9" stroke="#505050" stroke-width="2.2"/><line x1="2195.2" y1="2393.5" x2="2209.6" y2="2423.2" stroke="#505050" stroke-width="2.2"/><line x1="2216.7" y1="2354.8" x2="2238.2" y2="2384.5" stroke="#505050" stroke-width="2.2"/><line x1="2238.2" y1="2393.5" x2="2228.6" y2="2423.2" stroke="#505050" stroke-width="2.2"/><line x1="2238.2" y1="2393.5" x2="2247.7" y2="2423.2" stroke="#505050" stroke-width="2.2"/><line x1="2253.7" y1="2316.1" x2="2290.7" y2="2345.9" stroke="#505050" stroke-width="2.2"/><line x1="2290.7" y1="2354.8" x2="2276.3" y2="2384.5" stroke="#505050" stroke-width="2.2"/><line x1="2276.3" y1="2393.5" x2="2266.8" y2="2423.2" stroke="#505050" stroke-width="2.2"/><line x1="2276.3" y1="2393.5" x2="2285.9" y2="2423.2" stroke="#505050" stroke-width="2.2"/><line x1="2290.7" y1="2354.8" x2="2305.0" y2="2384.5" stroke="#505050" stroke-width="2.2"/><line x1="2311.5" y1="2277.5" x2="2369.4" y2="2307.2" stroke="#505050" stroke-width="2.2"/><line x1="2369.4" y1="2316.1" x2="2347.9" y2="2345.9" stroke="#505050" stroke-width="2.2"/><line x1="2347.9" y1="2354.8" x2="2333.6" y2="2384.5" stroke="#505050" stroke-width="2.2"/><line x1="2333.6" y1="2393.5" x2="2324.0" y2="2423.2" stroke="#505050" stroke-width="2.2"/><line x1="2333.6" y1="2393.5" x2="2343.1" y2="2423.2" stroke="#505050" stroke-width="2.2"/><line x1="2347.9" y1="2354.8" x2="2362.2" y2="2384.5" stroke="#505050" stroke-width="2.2"/><line x1="2369.4" y1="2316.1" x2="2390.8" y2="2345.9" stroke="#505050" stroke-width="2.2"/><line x1="2390.8" y1="2354.8" x2="2381.3" y2="2384.5" stroke="#505050" stroke-width="2.2"/><line x1="2390.8" y1="2354.8" x2="2400.4" y2="2384.5" stroke="#505050" stroke-width="2.2"/><line x1="2406.6" y1="2238.8" x2="2501.7" y2="2268.5" stroke="#505050" stroke-width="2.2"/><line x1="2501.7" y1="2277.5" x2="2464.8" y2="2307.2" stroke="#505050" stroke-width="2.2"/><line x1="2464.8" y1="2316.1" x2="2443.3" y2="2345.9" stroke="#505050" stroke-width="2.2"/><line x1="2443.3" y1="2354.8" x2="2429.0" y2="2384.5" stroke="#505050" stroke-width="2.2"/><line x1="2429.0" y1="2393.5" x2="2419.4" y2="2423.2" stroke="#505050" stroke-width="2.2"/><line x1="2429.0" y1="2393.5" x2="2438.5" y2="2423.2" stroke="#505050" stroke-width="2.2"/><line x1="2443.3" y1="2354.8" x2="2457.6" y2="2384.5" stroke="#505050" stroke-width="2.2"/><line x1="2464.8" y1="2316.1" x2="2486.2" y2="2345.9" stroke="#505050" stroke-width="2.2"/><line x1="2486.2" y1="2354.8" x2="2476.7" y2="2384.5" stroke="#505050" stroke-width="2.2"/><line x1="2486.2" y1="2354.8" x2="2495.8" y2="2384.5" stroke="#505050" stroke-width="2.2"/><line x1="2501.7" y1="2277.5" x2="2538.7" y2="2307.2" stroke="#505050" stroke-width="2.2"/><line x1="2538.7" y1="2316.1" x2="2524.4" y2="2345.9" stroke="#505050" stroke-width="2.2"/><line x1="2524.4" y1="2354.8" x2="2514.8" y2="2384.5" stroke="#505050" stroke-width="2.2"/><line x1="2524.4" y1="2354.8" x2="2533.9" y2="2384.5" stroke="#505050" stroke-width="2.2"/><line x1="2538.7" y1="2316.1" x2="2553.0" y2="2345.9" stroke="#505050" stroke-width="2.2"/><line x1="2559.4" y1="2200.1" x2="2712.2" y2="2229.9" stroke="#505050" stroke-width="2.2"/><line x1="2712.2" y1="2238.8" x2="2654.4" y2="2268.5" stroke="#505050" stroke-width="2.2"/><line x1="2654.4" y1="2277.5" x2="2617.4" y2="2307.2" stroke="#505050" stroke-width="2.2"/><line x1="2617.4" y1="2316.1" x2="2595.9" y2="2345.9" stroke="#505050" stroke-width="2.2"/><line x1="2595.9" y1="2354.8" x2="2581.6" y2="2384.5" stroke="#505050" stroke-width="2.2"/><line x1="2581.6" y1="2393.5" x2="2572.1" y2="2423.2" stroke="#505050" stroke-width="2.2"/><line x1="2581.6" y1="2393.5" x2="2591.2" y2="2423.2" stroke="#505050" stroke-width="2.2"/><line x1="2595.9" y1="2354.8" x2="2610.2" y2="2384.5" stroke="#505050" stroke-width="2.2"/><line x1="2617.4" y1="2316.1" x2="2638.9" y2="2345.9" stroke="#505050" stroke-width="2.2"/><line x1="2638.9" y1="2354.8" x2="2629.3" y2="2384.5" stroke="#505050" stroke-width="2.2"/><line x1="2638.9" y1="2354.8" x2="2648.4" y2="2384.5" stroke="#505050" stroke-width="2.2"/><line x1="2654.4" y1="2277.5" x2="2691.3" y2="2307.2" stroke="#505050" stroke-width="2.2"/><rect x="2792.1" y="2107.2" width="31.3" height="23.3" fill="#FF0000"/><rect x="2793.4" y="2108.5" width="28" height="10" fill="#0096D4"/><rect x="2793.4" y="2118.5" width="28" height="10" fill="#00C864"/><rect x="2145.4" y="2145.9" width="27.3" height="23.3" fill="#FF0000"/><rect x="2146.7" y="2147.2" width="24" height="10" fill="#0096D4"/><rect x="2146.7" y="2157.2" width="24" height="10" fill="#00C864"/><rect x="1746.0" y="2185.9" width="24" height="10" fill="#0096D4"/><rect x="1746.0" y="2195.9" width="24" height="10" fill="#99CC00"/><rect x="1498.0" y="2224.5" width="24" height="10" fill="#0096D4"/><rect x="1498.0" y="2234.5" width="24" height="10" fill="#99CC00"/><rect x="1345.2" y="2263.2" width="24" height="10" fill="#0096D4"/><rect x="1345.2" y="2273.2" width="24" height="10" fill="#99CC00"/><rect x="1250.1" y="2301.9" width="24" height="10" fill="#0096D4"/><rect x="1250.1" y="2311.9" width="24" height="10" fill="#99CC00"/><rect x="1194.3" y="2340.5" width="20" height="10" fill="#0096D4"/><rect x="1194.3" y="2350.5" width="20" height="10" fill="#99CC00"/><rect x="1157.3" y="2379.2" width="20" height="10" fill="#0096D4"/><rect x="1157.3" y="2389.2" width="20" height="10" fill="#99CC00"/><rect x="1135.8" y="2417.9" width="20" height="10" fill="#0096D4"/><rect x="1135.8" y="2427.9" width="20" height="10" fill="#99CC00"/><rect x="1121.5" y="2456.5" width="20" height="10" fill="#0096D4"/><rect x="1121.5" y="2466.5" width="20" height="10" fill="#99CC00"/><rect x="1112.0" y="2495.2" width="20" height="10" fill="#0096D4"/><rect x="1112.0" y="2505.2" width="20" height="10" fill="#99CC00"/><rect x="1131.1" y="2495.2" width="20" height="10" fill="#0096D4"/><rect x="1131.1" y="2505.2" width="20" height="10" fill="#99CC00"/><rect x="1150.2" y="2456.5" width="20" height="10" fill="#0096D4"/><rect x="1150.2" y="2466.5" width="20" height="10" fill="#99CC00"/><rect x="1178.8" y="2417.9" width="20" height="10" fill="#0096D4"/><rect x="1178.8" y="2427.9" width="20" height="10" fill="#99CC00"/><rect x="1169.2" y="2456.5" width="20" height="10" fill="#0096D4"/><rect x="1169.2" y="2466.5" width="20" height="10" fill="#99CC00"/><rect x="1188.3" y="2456.5" width="20" height="10" fill="#0096D4"/><rect x="1188.3" y="2466.5" width="20" height="10" fill="#99CC00"/><rect x="1231.2" y="2379.2" width="20" height="10" fill="#0096D4"/><rect x="1231.2" y="2389.2" width="20" height="10" fill="#99CC00"/><rect x="1216.9" y="2417.9" width="20" height="10" fill="#0096D4"/><rect x="1216.9" y="2427.9" width="20" height="10" fill="#99CC00"/><rect x="1207.4" y="2456.5" width="20" height="10" fill="#0096D4"/><rect x="1207.4" y="2466.5" width="20" height="10" fill="#99CC00"/><rect x="1226.5" y="2456.5" width="20" height="10" fill="#0096D4"/><rect x="1226.5" y="2466.5" width="20" height="10" fill="#99CC00"/><rect x="1245.6" y="2417.9" width="20" height="10" fill="#0096D4"/><rect x="1245.6" y="2427.9" width="20" height="10" fill="#99CC00"/><rect x="1310.0" y="2340.5" width="20" height="10" fill="#0096D4"/><rect x="1310.0" y="2350.5" width="20" height="10" fill="#99CC00"/><rect x="1288.5" y="2379.2" width="20" height="10" fill="#0096D4"/><rect x="1288.5" y="2389.2" width="20" height="10" fill="#99CC00"/><rect x="1274.2" y="2417.9" width="20" height="10" fill="#0096D4"/><rect x="1274.2" y="2427.9" width="20" height="10" fill="#99CC00"/><rect x="1264.6" y="2456.5" width="20" height="10" fill="#0096D4"/><rect x="1264.6" y="2466.5" width="20" height="10" fill="#99CC00"/><rect x="1283.7" y="2456.5" width="20" height="10" fill="#0096D4"/><rect x="1283.7" y="2466.5" width="20" height="10" fill="#99CC00"/><rect x="1302.8" y="2417.9" width="20" height="10" fill="#0096D4"/><rect x="1302.8" y="2427.9" width="20" height="10" fill="#99CC00"/><rect x="1331.4" y="2379.2" width="20" height="10" fill="#0096D4"/><rect x="1331.4" y="2389.2" width="20" height="10" fill="#99CC00"/><rect x="1321.9" y="2417.9" width="20" height="10" fill="#0096D4"/><rect x="1321.9" y="2427.9" width="20" height="10" fill="#99CC00"/><rect x="1341.0" y="2417.9" width="20" height="10" fill="#0096D4"/><rect x="1341.0" y="2427.9" width="20" height="10" fill="#99CC00"/><rect x="1442.3" y="2301.9" width="20" height="10" fill="#0096D4"/><rect x="1442.3" y="2311.9" width="20" height="10" fill="#99CC00"/><rect x="1405.4" y="2340.5" width="20" height="10" fill="#0096D4"/><rect x="1405.4" y="2350.5" width="20" height="10" fill="#99CC00"/><rect x="1383.9" y="2379.2" width="20" height="10" fill="#0096D4"/><rect x="1383.9" y="2389.2" width="20" height="10" fill="#99CC00"/><rect x="1369.6" y="2417.9" width="20" height="10" fill="#0096D4"/><rect x="1369.6" y="2427.9" width="20" height="10" fill="#99CC00"/><rect x="1360.0" y="2456.5" width="20" height="10" fill="#0096D4"/><rect x="1360.0" y="2466.5" width="20" height="10" fill="#99CC00"/><rect x="1379.1" y="2456.5" width="20" height="10" fill="#0096D4"/><rect x="1379.1" y="2466.5" width="20" height="10" fill="#99CC00"/><rect x="1398.2" y="2417.9" width="20" height="10" fill="#0096D4"/><rect x="1398.2" y="2427.9" width="20" height="10" fill="#99CC00"/><rect x="1426.8" y="2379.2" width="20" height="10" fill="#0096D4"/><rect x="1426.8" y="2389.2" width="20" height="10" fill="#99CC00"/><rect x="1417.3" y="2417.9" width="20" height="10" fill="#0096D4"/><rect x="1417.3" y="2427.9" width="20" height="10" fill="#99CC00"/><rect x="1436.4" y="2417.9" width="20" height="10" fill="#0096D4"/><rect x="1436.4" y="2427.9" width="20" height="10" fill="#99CC00"/><rect x="1479.3" y="2340.5" width="20" height="10" fill="#0096D4"/><rect x="1479.3" y="2350.5" width="20" height="10" fill="#99CC00"/><rect x="1465.0" y="2379.2" width="20" height="10" fill="#0096D4"/><rect x="1465.0" y="2389.2" width="20" height="10" fill="#99CC00"/><rect x="1455.4" y="2417.9" width="20" height="10" fill="#0096D4"/><rect x="1455.4" y="2427.9" width="20" height="10" fill="#99CC00"/><rect x="1474.5" y="2417.9" width="20" height="10" fill="#0096D4"/><rect x="1474.5" y="2427.9" width="20" height="10" fill="#99CC00"/><rect x="1493.6" y="2379.2" width="20" height="10" fill="#0096D4"/><rect x="1493.6" y="2389.2" width="20" height="10" fill="#99CC00"/><rect x="1650.8" y="2263.2" width="24" height="10" fill="#0096D4"/><rect x="1650.8" y="2273.2" width="24" height="10" fill="#99CC00"/><rect x="1595.0" y="2301.9" width="20" height="10" fill="#0096D4"/><rect x="1595.0" y="2311.9" width="20" height="10" fill="#99CC00"/><rect x="1558.0" y="2340.5" width="20" height="10" fill="#0096D4"/><rect x="1558.0" y="2350.5" width="20" height="10" fill="#99CC00"/><rect x="1536.5" y="2379.2" width="20" height="10" fill="#0096D4"/><rect x="1536.5" y="2389.2" width="20" height="10" fill="#99CC00"/><rect x="1522.2" y="2417.9" width="20" height="10" fill="#0096D4"/><rect x="1522.2" y="2427.9" width="20" height="10" fill="#99CC00"/><rect x="1512.7" y="2456.5" width="20" height="10" fill="#0096D4"/><rect x="1512.7" y="2466.5" width="20" height="10" fill="#99CC00"/><rect x="1531.8" y="2456.5" width="20" height="10" fill="#0096D4"/><rect x="1531.8" y="2466.5" width="20" height="10" fill="#99CC00"/><rect x="1550.8" y="2417.9" width="20" height="10" fill="#0096D4"/><rect x="1550.8" y="2427.9" width="20" height="10" fill="#99CC00"/><rect x="1579.5" y="2379.2" width="20" height="10" fill="#0096D4"/><rect x="1579.5" y="2389.2" width="20" height="10" fill="#99CC00"/><rect x="1569.9" y="2417.9" width="20" height="10" fill="#0096D4"/><rect x="1569.9" y="2427.9" width="20" height="10" fill="#99CC00"/><rect x="1589.0" y="2417.9" width="20" height="10" fill="#0096D4"/><rect x="1589.0" y="2427.9" width="20" height="10" fill="#99CC00"/><rect x="1631.9" y="2340.5" width="20" height="10" fill="#0096D4"/><rect x="1631.9" y="2350.5" width="20" height="10" fill="#99CC00"/><rect x="1617.6" y="2379.2" width="20" height="10" fill="#0096D4"/><rect x="1617.6" y="2389.2" width="20" height="10" fill="#99CC00"/><rect x="1608.1" y="2417.9" width="20" height="10" fill="#0096D4"/><rect x="1608.1" y="2427.9" width="20" height="10" fill="#99CC00"/><rect x="1627.2" y="2417.9" width="20" height="10" fill="#0096D4"/><rect x="1627.2" y="2427.9" width="20" height="10" fill="#99CC00"/><rect x="1646.2" y="2379.2" width="20" height="10" fill="#0096D4"/><rect x="1646.2" y="2389.2" width="20" height="10" fill="#99CC00"/><rect x="1710.6" y="2301.9" width="20" height="10" fill="#0096D4"/><rect x="1710.6" y="2311.9" width="20" height="10" fill="#99CC00"/><rect x="1689.2" y="2340.5" width="20" height="10" fill="#0096D4"/><rect x="1689.2" y="2350.5" width="20" height="10" fill="#99CC00"/><rect x="1674.9" y="2379.2" width="20" height="10" fill="#0096D4"/><rect x="1674.9" y="2389.2" width="20" height="10" fill="#99CC00"/><rect x="1665.3" y="2417.9" width="20" height="10" fill="#0096D4"/><rect x="1665.3" y="2427.9" width="20" height="10" fill="#99CC00"/><rect x="1684.4" y="2417.9" width="20" height="10" fill="#0096D4"/><rect x="1684.4" y="2427.9" width="20" height="10" fill="#99CC00"/><rect x="1703.5" y="2379.2" width="20" height="10" fill="#0096D4"/><rect x="1703.5" y="2389.2" width="20" height="10" fill="#99CC00"/><rect x="1732.1" y="2340.5" width="20" height="10" fill="#0096D4"/><rect x="1732.1" y="2350.5" width="20" height="10" fill="#99CC00"/><rect x="1722.6" y="2379.2" width="20" height="10" fill="#0096D4"/><rect x="1722.6" y="2389.2" width="20" height="10" fill="#99CC00"/><rect x="1741.6" y="2379.2" width="20" height="10" fill="#0096D4"/><rect x="1741.6" y="2389.2" width="20" height="10" fill="#99CC00"/><rect x="1993.9" y="2224.5" width="24" height="10" fill="#0096D4"/><rect x="1993.9" y="2234.5" width="24" height="10" fill="#99CC00"/><rect x="1898.8" y="2263.2" width="24" height="10" fill="#0096D4"/><rect x="1898.8" y="2273.2" width="24" height="10" fill="#99CC00"/><rect x="1843.0" y="2301.9" width="20" height="10" fill="#0096D4"/><rect x="1843.0" y="2311.9" width="20" height="10" fill="#99CC00"/><rect x="1806.0" y="2340.5" width="20" height="10" fill="#0096D4"/><rect x="1806.0" y="2350.5" width="20" height="10" fill="#99CC00"/><rect x="1784.6" y="2379.2" width="20" height="10" fill="#0096D4"/><rect x="1784.6" y="2389.2" width="20" height="10" fill="#99CC00"/><rect x="1770.3" y="2417.9" width="20" height="10" fill="#0096D4"/><rect x="1770.3" y="2427.9" width="20" height="10" fill="#99CC00"/><rect x="1760.7" y="2456.5" width="20" height="10" fill="#0096D4"/><rect x="1760.7" y="2466.5" width="20" height="10" fill="#99CC00"/><rect x="1779.8" y="2456.5" width="20" height="10" fill="#0096D4"/><rect x="1779.8" y="2466.5" width="20" height="10" fill="#99CC00"/><rect x="1798.9" y="2417.9" width="20" height="10" fill="#0096D4"/><rect x="1798.9" y="2427.9" width="20" height="10" fill="#99CC00"/><rect x="1827.5" y="2379.2" width="20" height="10" fill="#0096D4"/><rect x="1827.5" y="2389.2" width="20" height="10" fill="#99CC00"/><rect x="1818.0" y="2417.9" width="20" height="10" fill="#0096D4"/><rect x="1818.0" y="2427.9" width="20" height="10" fill="#99CC00"/><rect x="1837.0" y="2417.9" width="20" height="10" fill="#0096D4"/><rect x="1837.0" y="2427.9" width="20" height="10" fill="#99CC00"/><rect x="1880.0" y="2340.5" width="20" height="10" fill="#0096D4"/><rect x="1880.0" y="2350.5" width="20" height="10" fill="#99CC00"/><rect x="1865.7" y="2379.2" width="20" height="10" fill="#0096D4"/><rect x="1865.7" y="2389.2" width="20" height="10" fill="#99CC00"/><rect x="1856.1" y="2417.9" width="20" height="10" fill="#0096D4"/><rect x="1856.1" y="2427.9" width="20" height="10" fill="#99CC00"/><rect x="1875.2" y="2417.9" width="20" height="10" fill="#0096D4"/><rect x="1875.2" y="2427.9" width="20" height="10" fill="#99CC00"/><rect x="1894.3" y="2379.2" width="20" height="10" fill="#0096D4"/><rect x="1894.3" y="2389.2" width="20" height="10" fill="#99CC00"/><rect x="1958.7" y="2301.9" width="20" height="10" fill="#0096D4"/><rect x="1958.7" y="2311.9" width="20" height="10" fill="#99CC00"/><rect x="1937.2" y="2340.5" width="20" height="10" fill="#0096D4"/><rect x="1937.2" y="2350.5" width="20" height="10" fill="#99CC00"/><rect x="1922.9" y="2379.2" width="20" height="10" fill="#0096D4"/><rect x="1922.9" y="2389.2" width="20" height="10" fill="#99CC00"/><rect x="1913.4" y="2417.9" width="20" height="10" fill="#0096D4"/><rect x="1913.4" y="2427.9" width="20" height="10" fill="#99CC00"/><rect x="1932.4" y="2417.9" width="20" height="10" fill="#0096D4"/><rect x="1932.4" y="2427.9" width="20" height="10" fill="#99CC00"/><rect x="1951.5" y="2379.2" width="20" height="10" fill="#0096D4"/><rect x="1951.5" y="2389.2" width="20" height="10" fill="#99CC00"/><rect x="1980.1" y="2340.5" width="20" height="10" fill="#0096D4"/><rect x="1980.1" y="2350.5" width="20" height="10" fill="#99CC00"/><rect x="1970.6" y="2379.2" width="20" height="10" fill="#0096D4"/><rect x="1970.6" y="2389.2" width="20" height="10" fill="#99CC00"/><rect x="1989.7" y="2379.2" width="20" height="10" fill="#0096D4"/><rect x="1989.7" y="2389.2" width="20" height="10" fill="#99CC00"/><rect x="2091.0" y="2263.2" width="20" height="10" fill="#0096D4"/><rect x="2091.0" y="2273.2" width="20" height="10" fill="#99CC00"/><rect x="2054.1" y="2301.9" width="20" height="10" fill="#0096D4"/><rect x="2054.1" y="2311.9" width="20" height="10" fill="#99CC00"/><rect x="2032.6" y="2340.5" width="20" height="10" fill="#0096D4"/><rect x="2032.6" y="2350.5" width="20" height="10" fill="#99CC00"/><rect x="2018.3" y="2379.2" width="20" height="10" fill="#0096D4"/><rect x="2018.3" y="2389.2" width="20" height="10" fill="#99CC00"/><rect x="2008.8" y="2417.9" width="20" height="10" fill="#0096D4"/><rect x="2008.8" y="2427.9" width="20" height="10" fill="#99CC00"/><rect x="2027.8" y="2417.9" width="20" height="10" fill="#0096D4"/><rect x="2027.8" y="2427.9" width="20" height="10" fill="#99CC00"/><rect x="2046.9" y="2379.2" width="20" height="10" fill="#0096D4"/><rect x="2046.9" y="2389.2" width="20" height="10" fill="#99CC00"/><rect x="2075.5" y="2340.5" width="20" height="10" fill="#0096D4"/><rect x="2075.5" y="2350.5" width="20" height="10" fill="#99CC00"/><rect x="2066.0" y="2379.2" width="20" height="10" fill="#0096D4"/><rect x="2066.0" y="2389.2" width="20" height="10" fill="#99CC00"/><rect x="2085.1" y="2379.2" width="20" height="10" fill="#0096D4"/><rect x="2085.1" y="2389.2" width="20" height="10" fill="#99CC00"/><rect x="2128.0" y="2301.9" width="20" height="10" fill="#0096D4"/><rect x="2128.0" y="2311.9" width="20" height="10" fill="#99CC00"/><rect x="2113.7" y="2340.5" width="20" height="10" fill="#0096D4"/><rect x="2113.7" y="2350.5" width="20" height="10" fill="#99CC00"/><rect x="2104.2" y="2379.2" width="20" height="10" fill="#0096D4"/><rect x="2104.2" y="2389.2" width="20" height="10" fill="#99CC00"/><rect x="2123.2" y="2379.2" width="20" height="10" fill="#0096D4"/><rect x="2123.2" y="2389.2" width="20" height="10" fill="#99CC00"/><rect x="2142.3" y="2340.5" width="20" height="10" fill="#0096D4"/><rect x="2142.3" y="2350.5" width="20" height="10" fill="#99CC00"/><rect x="2546.1" y="2184.6" width="27.3" height="23.3" fill="#FF0000"/><rect x="2547.4" y="2185.9" width="24" height="10" fill="#0096D4"/><rect x="2547.4" y="2195.9" width="24" height="10" fill="#00C864"/><rect x="2394.6" y="2224.5" width="24" height="10" fill="#0096D4"/><rect x="2394.6" y="2234.5" width="24" height="10" fill="#99CC00"/><rect x="2299.5" y="2263.2" width="24" height="10" fill="#0096D4"/><rect x="2299.5" y="2273.2" width="24" height="10" fill="#99CC00"/><rect x="2243.7" y="2301.9" width="20" height="10" fill="#0096D4"/><rect x="2243.7" y="2311.9" width="20" height="10" fill="#99CC00"/><rect x="2206.7" y="2340.5" width="20" height="10" fill="#0096D4"/><rect x="2206.7" y="2350.5" width="20" height="10" fill="#99CC00"/><rect x="2185.2" y="2379.2" width="20" height="10" fill="#0096D4"/><rect x="2185.2" y="2389.2" width="20" height="10" fill="#99CC00"/><rect x="2170.9" y="2417.9" width="20" height="10" fill="#0096D4"/><rect x="2170.9" y="2427.9" width="20" height="10" fill="#99CC00"/><rect x="2161.4" y="2456.5" width="20" height="10" fill="#0096D4"/><rect x="2161.4" y="2466.5" width="20" height="10" fill="#99CC00"/><rect x="2180.5" y="2456.5" width="20" height="10" fill="#0096D4"/><rect x="2180.5" y="2466.5" width="20" height="10" fill="#99CC00"/><rect x="2199.6" y="2417.9" width="20" height="10" fill="#0096D4"/><rect x="2199.6" y="2427.9" width="20" height="10" fill="#99CC00"/><rect x="2228.2" y="2379.2" width="20" height="10" fill="#0096D4"/><rect x="2228.2" y="2389.2" width="20" height="10" fill="#99CC00"/><rect x="2218.6" y="2417.9" width="20" height="10" fill="#0096D4"/><rect x="2218.6" y="2427.9" width="20" height="10" fill="#99CC00"/><rect x="2237.7" y="2417.9" width="20" height="10" fill="#0096D4"/><rect x="2237.7" y="2427.9" width="20" height="10" fill="#99CC00"/><rect x="2280.7" y="2340.5" width="20" height="10" fill="#0096D4"/><rect x="2280.7" y="2350.5" width="20" height="10" fill="#99CC00"/><rect x="2266.3" y="2379.2" width="20" height="10" fill="#0096D4"/><rect x="2266.3" y="2389.2" width="20" height="10" fill="#99CC00"/><rect x="2256.8" y="2417.9" width="20" height="10" fill="#0096D4"/><rect x="2256.8" y="2427.9" width="20" height="10" fill="#99CC00"/><rect x="2275.9" y="2417.9" width="20" height="10" fill="#0096D4"/><rect x="2275.9" y="2427.9" width="20" height="10" fill="#99CC00"/><rect x="2295.0" y="2379.2" width="20" height="10" fill="#0096D4"/><rect x="2295.0" y="2389.2" width="20" height="10" fill="#99CC00"/><rect x="2359.4" y="2301.9" width="20" height="10" fill="#0096D4"/><rect x="2359.4" y="2311.9" width="20" height="10" fill="#99CC00"/><rect x="2337.9" y="2340.5" width="20" height="10" fill="#0096D4"/><rect x="2337.9" y="2350.5" width="20" height="10" fill="#99CC00"/><rect x="2323.6" y="2379.2" width="20" height="10" fill="#0096D4"/><rect x="2323.6" y="2389.2" width="20" height="10" fill="#99CC00"/><rect x="2314.0" y="2417.9" width="20" height="10" fill="#0096D4"/><rect x="2314.0" y="2427.9" width="20" height="10" fill="#99CC00"/><rect x="2333.1" y="2417.9" width="20" height="10" fill="#0096D4"/><rect x="2333.1" y="2427.9" width="20" height="10" fill="#99CC00"/><rect x="2352.2" y="2379.2" width="20" height="10" fill="#0096D4"/><rect x="2352.2" y="2389.2" width="20" height="10" fill="#99CC00"/><rect x="2380.8" y="2340.5" width="20" height="10" fill="#0096D4"/><rect x="2380.8" y="2350.5" width="20" height="10" fill="#99CC00"/><rect x="2371.3" y="2379.2" width="20" height="10" fill="#0096D4"/><rect x="2371.3" y="2389.2" width="20" height="10" fill="#99CC00"/><rect x="2390.4" y="2379.2" width="20" height="10" fill="#0096D4"/><rect x="2390.4" y="2389.2" width="20" height="10" fill="#99CC00"/><rect x="2491.7" y="2263.2" width="20" height="10" fill="#0096D4"/><rect x="2491.7" y="2273.2" width="20" height="10" fill="#99CC00"/><rect x="2454.8" y="2301.9" width="20" height="10" fill="#0096D4"/><rect x="2454.8" y="2311.9" width="20" height="10" fill="#99CC00"/><rect x="2433.3" y="2340.5" width="20" height="10" fill="#0096D4"/><rect x="2433.3" y="2350.5" width="20" height="10" fill="#99CC00"/><rect x="2419.0" y="2379.2" width="20" height="10" fill="#0096D4"/><rect x="2419.0" y="2389.2" width="20" height="10" fill="#99CC00"/><rect x="2409.4" y="2417.9" width="20" height="10" fill="#0096D4"/><rect x="2409.4" y="2427.9" width="20" height="10" fill="#99CC00"/><rect x="2428.5" y="2417.9" width="20" height="10" fill="#0096D4"/><rect x="2428.5" y="2427.9" width="20" height="10" fill="#99CC00"/><rect x="2447.6" y="2379.2" width="20" height="10" fill="#0096D4"/><rect x="2447.6" y="2389.2" width="20" height="10" fill="#99CC00"/><rect x="2476.2" y="2340.5" width="20" height="10" fill="#0096D4"/><rect x="2476.2" y="2350.5" width="20" height="10" fill="#99CC00"/><rect x="2466.7" y="2379.2" width="20" height="10" fill="#0096D4"/><rect x="2466.7" y="2389.2" width="20" height="10" fill="#99CC00"/><rect x="2485.8" y="2379.2" width="20" height="10" fill="#0096D4"/><rect x="2485.8" y="2389.2" width="20" height="10" fill="#99CC00"/><rect x="2528.7" y="2301.9" width="20" height="10" fill="#0096D4"/><rect x="2528.7" y="2311.9" width="20" height="10" fill="#99CC00"/><rect x="2514.4" y="2340.5" width="20" height="10" fill="#0096D4"/><rect x="2514.4" y="2350.5" width="20" height="10" fill="#99CC00"/><rect x="2504.8" y="2379.2" width="20" height="10" fill="#0096D4"/><rect x="2504.8" y="2389.2" width="20" height="10" fill="#99CC00"/><rect x="2523.9" y="2379.2" width="20" height="10" fill="#0096D4"/><rect x="2523.9" y="2389.2" width="20" height="10" fill="#99CC00"/><rect x="2543.0" y="2340.5" width="20" height="10" fill="#0096D4"/><rect x="2543.0" y="2350.5" width="20" height="10" fill="#99CC00"/><rect x="2698.9" y="2223.2" width="27.3" height="23.3" fill="#FF0000"/><rect x="2700.2" y="2224.5" width="24" height="10" fill="#0096D4"/><rect x="2700.2" y="2234.5" width="24" height="10" fill="#00C864"/><rect x="2643.1" y="2261.9" width="23.3" height="23.3" fill="#FF0000"/><rect x="2644.4" y="2263.2" width="20" height="10" fill="#0096D4"/><rect x="2644.4" y="2273.2" width="20" height="10" fill="#00C864"/><rect x="2607.4" y="2301.9" width="20" height="10" fill="#0096D4"/><rect x="2607.4" y="2311.9" width="20" height="10" fill="#99CC00"/><rect x="2585.9" y="2340.5" width="20" height="10" fill="#0096D4"/><rect x="2585.9" y="2350.5" width="20" height="10" fill="#99CC00"/><rect x="2571.6" y="2379.2" width="20" height="10" fill="#0096D4"/><rect x="2571.6" y="2389.2" width="20" height="10" fill="#99CC00"/><rect x="2562.1" y="2417.9" width="20" height="10" fill="#0096D4"/><rect x="2562.1" y="2427.9" width="20" height="10" fill="#99CC00"/><rect x="2581.2" y="2417.9" width="20" height="10" fill="#0096D4"/><rect x="2581.2" y="2427.9" width="20" height="10" fill="#99CC00"/><rect x="2600.2" y="2379.2" width="20" height="10" fill="#0096D4"/><rect x="2600.2" y="2389.2" width="20" height="10" fill="#99CC00"/><rect x="2628.9" y="2340.5" width="20" height="10" fill="#0096D4"/><rect x="2628.9" y="2350.5" width="20" height="10" fill="#99CC00"/><rect x="2619.3" y="2379.2" width="20" height="10" fill="#0096D4"/><rect x="2619.3" y="2389.2" width="20" height="10" fill="#99CC00"/><rect x="2638.4" y="2379.2" width="20" height="10" fill="#0096D4"/><rect x="2638.4" y="2389.2" width="20" height="10" fill="#99CC00"/><rect x="2680.0" y="2300.6" width="23.3" height="23.3" fill="#000000"/><rect x="2681.3" y="2301.9" width="20" height="10" fill="#0096D4"/><rect x="2681.3" y="2311.9" width="20" height="10" fill="#00C864"/><rect x="2486" y="2188" width="249" height="198" fill="none" stroke="#646464" stroke-width="9.5"/></g>
<rect x="3186.0" y="599" width="236" height="170" fill="#FF0000"/><rect x="3197.0" y="609" width="210" height="73" fill="#0096D4"/><rect x="3197.0" y="682" width="210" height="72" fill="#00C864"/><text x="3298" y="668" class="nt" style="font-size:55px">11</text><line x1="3303" y1="769" x2="3303" y2="798" stroke="#505050" stroke-width="3"/><rect x="3200.0" y="798" width="208" height="170" fill="#FF0000"/><rect x="3211.0" y="808" width="182" height="73" fill="#0096D4"/><rect x="3211.0" y="881" width="182" height="72" fill="#00C864"/><text x="3298" y="867" class="nt" style="font-size:55px">10</text><line x1="3303" y1="968" x2="3303" y2="997" stroke="#505050" stroke-width="3"/><rect x="3200.0" y="997" width="208" height="170" fill="#FF0000"/><rect x="3211.0" y="1007" width="182" height="73" fill="#0096D4"/><rect x="3211.0" y="1080" width="182" height="72" fill="#00C864"/><text x="3298" y="1066" class="nt" style="font-size:55px">8</text><line x1="3303" y1="1167" x2="3303" y2="1196" stroke="#505050" stroke-width="3"/><rect x="3200.0" y="1196" width="208" height="170" fill="#FF0000"/><rect x="3211.0" y="1206" width="182" height="73" fill="#0096D4"/><rect x="3211.0" y="1279" width="182" height="72" fill="#00C864"/><text x="3298" y="1265" class="nt" style="font-size:55px">6</text><line x1="3303" y1="1366" x2="3303" y2="1395" stroke="#505050" stroke-width="3"/><rect x="3214.0" y="1395" width="180" height="170" fill="#FF0000"/><rect x="3225.0" y="1405" width="154" height="73" fill="#0096D4"/><rect x="3225.0" y="1478" width="154" height="72" fill="#00C864"/><text x="3298" y="1464" class="nt" style="font-size:55px">5</text><line x1="3303" y1="1565" x2="3303" y2="1594" stroke="#505050" stroke-width="3"/><rect x="3214.0" y="1594" width="180" height="170" fill="#000000"/><rect x="3225.0" y="1604" width="154" height="73" fill="#0096D4"/><rect x="3225.0" y="1677" width="154" height="72" fill="#00C864"/><text x="3298" y="1663" class="nt" style="font-size:55px">3</text></svg>
</body></html>
